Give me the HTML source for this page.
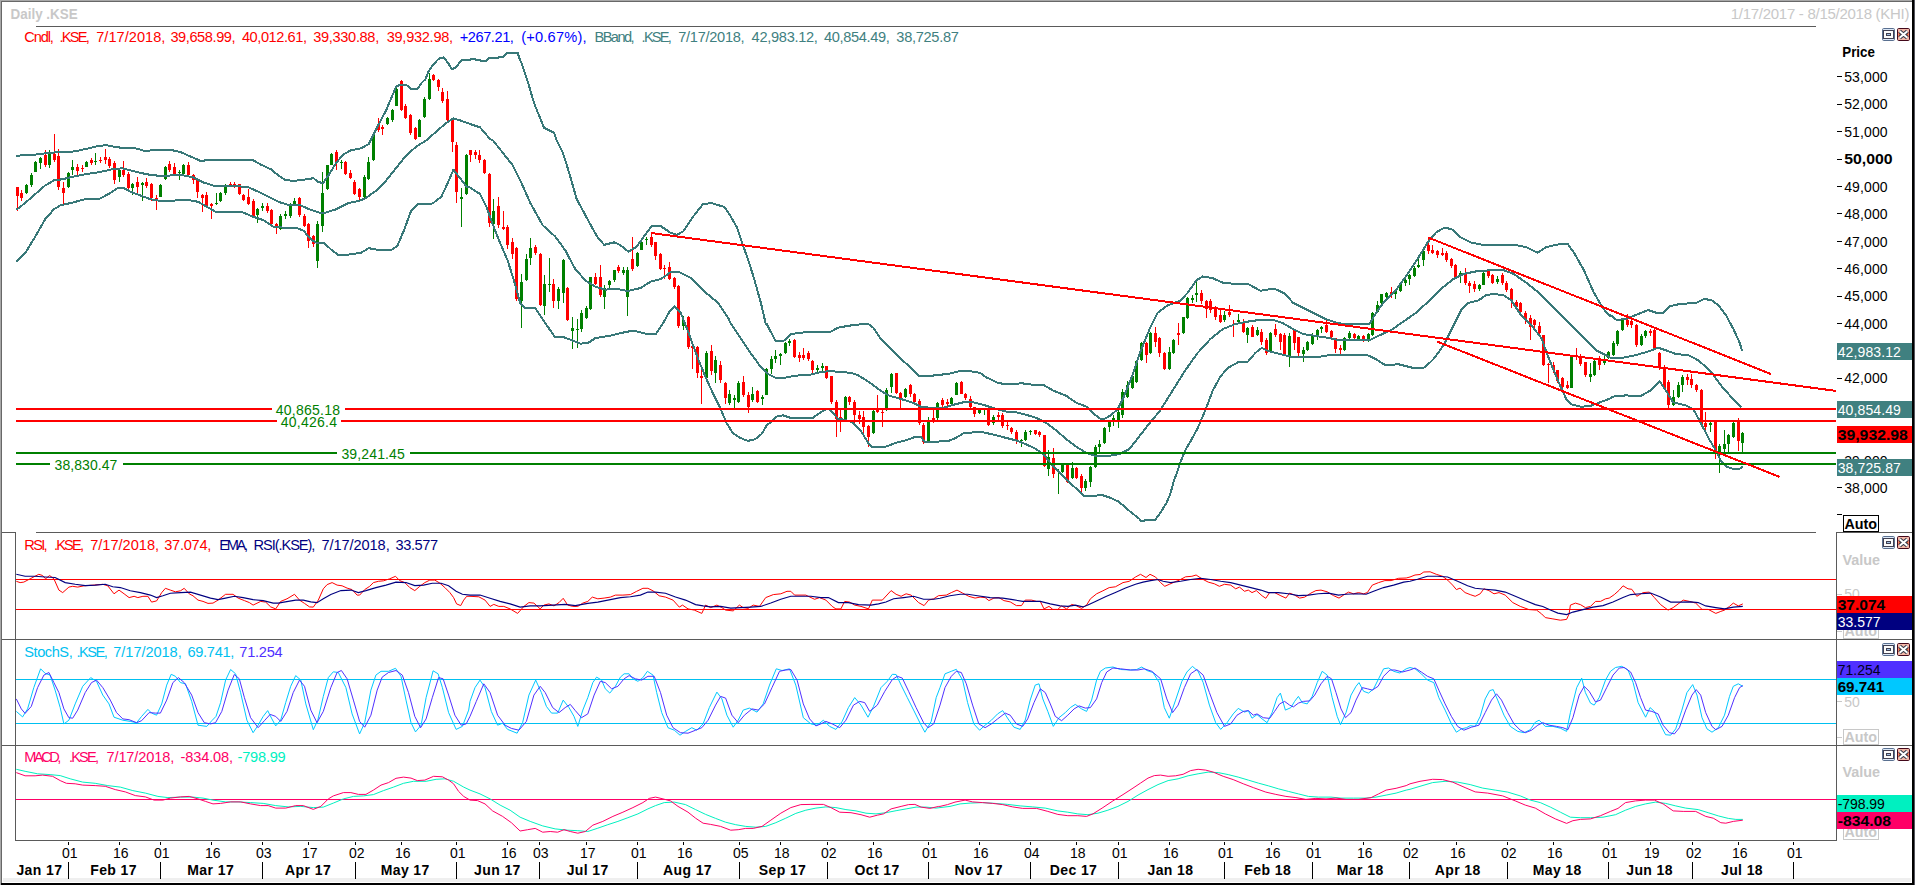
<!DOCTYPE html>
<html><head><meta charset="utf-8"><title>Daily .KSE</title>
<style>html,body{margin:0;padding:0;background:#fff;overflow:hidden}svg{display:block}text{font-family:"Liberation Sans",Arial,sans-serif;white-space:pre}</style>
</head><body>
<svg width="1915" height="885" viewBox="0 0 1915 885">
<g shape-rendering="crispEdges">
<rect x="0" y="0" width="1915" height="885" fill="#fff"/>
<rect x="0" y="0" width="1915" height="1" fill="#a8a8a8"/>
<rect x="1" y="1" width="1911" height="1" fill="#686868"/>
<rect x="0" y="0" width="1" height="885" fill="#a8a8a8"/>
<rect x="1" y="1" width="1" height="882" fill="#686868"/>
<rect x="1912" y="0" width="2" height="885" fill="#000"/>
<rect x="1914" y="0" width="1" height="885" fill="#55555d"/>
<rect x="3" y="878" width="1908" height="4" fill="#efefef"/>
<rect x="1" y="883" width="1913" height="2" fill="#000"/>
<rect x="36" y="26" width="1780" height="1" fill="#5a5a5a"/>
<rect x="36" y="532" width="1780" height="1" fill="#5a5a5a"/>
<rect x="2" y="532" width="14" height="1" fill="#5a5a5a"/>
<rect x="15" y="532" width="1" height="309" fill="#5a5a5a"/>
<rect x="1836" y="532" width="76" height="1" fill="#5a5a5a"/>
<rect x="1836" y="532" width="1" height="309" fill="#5a5a5a"/>
<rect x="2" y="639" width="1910" height="1" fill="#5a5a5a"/>
<rect x="2" y="745" width="1910" height="1" fill="#5a5a5a"/>
<rect x="15" y="840" width="1822" height="1" fill="#5a5a5a"/>
</g>
<clipPath id="cm"><rect x="16" y="27" width="1820" height="505"/></clipPath>
<g clip-path="url(#cm)">
<g shape-rendering="crispEdges">
<rect x="17" y="187" width="1" height="24" fill="#ff0000"/>
<rect x="16" y="187" width="3" height="9" fill="#ff0000"/>
<rect x="21" y="190" width="1" height="11" fill="#ff0000"/>
<rect x="20" y="193" width="3" height="5" fill="#ff0000"/>
<rect x="26" y="184" width="1" height="10" fill="#008000"/>
<rect x="25" y="185" width="3" height="8" fill="#008000"/>
<rect x="31" y="173" width="1" height="14" fill="#008000"/>
<rect x="30" y="175" width="3" height="10" fill="#008000"/>
<rect x="35" y="161" width="1" height="11" fill="#008000"/>
<rect x="34" y="162" width="3" height="10" fill="#008000"/>
<rect x="40" y="157" width="1" height="12" fill="#008000"/>
<rect x="39" y="158" width="3" height="5" fill="#008000"/>
<rect x="45" y="150" width="1" height="17" fill="#ff0000"/>
<rect x="44" y="155" width="3" height="10" fill="#ff0000"/>
<rect x="49" y="150" width="1" height="18" fill="#008000"/>
<rect x="48" y="152" width="3" height="13" fill="#008000"/>
<rect x="54" y="134" width="1" height="28" fill="#ff0000"/>
<rect x="53" y="154" width="3" height="6" fill="#ff0000"/>
<rect x="58" y="149" width="1" height="41" fill="#ff0000"/>
<rect x="57" y="156" width="3" height="31" fill="#ff0000"/>
<rect x="63" y="182" width="1" height="22" fill="#ff0000"/>
<rect x="62" y="188" width="3" height="5" fill="#ff0000"/>
<rect x="68" y="172" width="1" height="16" fill="#008000"/>
<rect x="67" y="173" width="3" height="14" fill="#008000"/>
<rect x="72" y="160" width="1" height="15" fill="#008000"/>
<rect x="71" y="167" width="3" height="3" fill="#008000"/>
<rect x="77" y="164" width="1" height="11" fill="#ff0000"/>
<rect x="76" y="167" width="3" height="4" fill="#ff0000"/>
<rect x="82" y="165" width="1" height="7" fill="#ff0000"/>
<rect x="81" y="168" width="3" height="1" fill="#ff0000"/>
<rect x="86" y="161" width="1" height="6" fill="#008000"/>
<rect x="85" y="162" width="3" height="5" fill="#008000"/>
<rect x="91" y="158" width="1" height="7" fill="#ff0000"/>
<rect x="90" y="160" width="3" height="3" fill="#ff0000"/>
<rect x="95" y="153" width="1" height="12" fill="#008000"/>
<rect x="94" y="161" width="3" height="1" fill="#008000"/>
<rect x="100" y="157" width="1" height="6" fill="#ff0000"/>
<rect x="99" y="160" width="3" height="1" fill="#ff0000"/>
<rect x="105" y="149" width="1" height="15" fill="#ff0000"/>
<rect x="104" y="157" width="3" height="3" fill="#ff0000"/>
<rect x="109" y="157" width="1" height="11" fill="#ff0000"/>
<rect x="108" y="159" width="3" height="7" fill="#ff0000"/>
<rect x="114" y="161" width="1" height="23" fill="#ff0000"/>
<rect x="113" y="163" width="3" height="17" fill="#ff0000"/>
<rect x="119" y="169" width="1" height="13" fill="#008000"/>
<rect x="118" y="170" width="3" height="7" fill="#008000"/>
<rect x="123" y="161" width="1" height="16" fill="#ff0000"/>
<rect x="122" y="170" width="3" height="5" fill="#ff0000"/>
<rect x="128" y="172" width="1" height="18" fill="#ff0000"/>
<rect x="127" y="174" width="3" height="14" fill="#ff0000"/>
<rect x="132" y="183" width="1" height="12" fill="#008000"/>
<rect x="131" y="184" width="3" height="4" fill="#008000"/>
<rect x="137" y="177" width="1" height="16" fill="#ff0000"/>
<rect x="136" y="182" width="3" height="5" fill="#ff0000"/>
<rect x="142" y="182" width="1" height="19" fill="#008000"/>
<rect x="141" y="183" width="3" height="2" fill="#008000"/>
<rect x="146" y="178" width="1" height="10" fill="#ff0000"/>
<rect x="145" y="182" width="3" height="4" fill="#ff0000"/>
<rect x="151" y="183" width="1" height="18" fill="#ff0000"/>
<rect x="150" y="184" width="3" height="14" fill="#ff0000"/>
<rect x="156" y="195" width="1" height="15" fill="#ff0000"/>
<rect x="155" y="198" width="3" height="1" fill="#ff0000"/>
<rect x="160" y="184" width="1" height="13" fill="#008000"/>
<rect x="159" y="185" width="3" height="12" fill="#008000"/>
<rect x="165" y="166" width="1" height="14" fill="#008000"/>
<rect x="164" y="167" width="3" height="12" fill="#008000"/>
<rect x="169" y="161" width="1" height="11" fill="#ff0000"/>
<rect x="168" y="164" width="3" height="6" fill="#ff0000"/>
<rect x="174" y="163" width="1" height="12" fill="#ff0000"/>
<rect x="173" y="167" width="3" height="8" fill="#ff0000"/>
<rect x="179" y="170" width="1" height="10" fill="#008000"/>
<rect x="178" y="172" width="3" height="1" fill="#008000"/>
<rect x="183" y="164" width="1" height="11" fill="#008000"/>
<rect x="182" y="165" width="3" height="9" fill="#008000"/>
<rect x="188" y="162" width="1" height="15" fill="#ff0000"/>
<rect x="187" y="165" width="3" height="10" fill="#ff0000"/>
<rect x="193" y="174" width="1" height="10" fill="#ff0000"/>
<rect x="192" y="175" width="3" height="5" fill="#ff0000"/>
<rect x="197" y="179" width="1" height="19" fill="#ff0000"/>
<rect x="196" y="180" width="3" height="12" fill="#ff0000"/>
<rect x="202" y="194" width="1" height="18" fill="#ff0000"/>
<rect x="201" y="195" width="3" height="3" fill="#ff0000"/>
<rect x="206" y="192" width="1" height="15" fill="#ff0000"/>
<rect x="205" y="195" width="3" height="11" fill="#ff0000"/>
<rect x="211" y="203" width="1" height="16" fill="#ff0000"/>
<rect x="210" y="204" width="3" height="2" fill="#ff0000"/>
<rect x="216" y="193" width="1" height="12" fill="#008000"/>
<rect x="215" y="203" width="3" height="1" fill="#008000"/>
<rect x="220" y="192" width="1" height="10" fill="#008000"/>
<rect x="219" y="193" width="3" height="8" fill="#008000"/>
<rect x="225" y="184" width="1" height="11" fill="#008000"/>
<rect x="224" y="185" width="3" height="8" fill="#008000"/>
<rect x="230" y="182" width="1" height="5" fill="#ff0000"/>
<rect x="229" y="184" width="3" height="1" fill="#ff0000"/>
<rect x="234" y="182" width="1" height="6" fill="#ff0000"/>
<rect x="233" y="184" width="3" height="3" fill="#ff0000"/>
<rect x="239" y="184" width="1" height="11" fill="#ff0000"/>
<rect x="238" y="184" width="3" height="10" fill="#ff0000"/>
<rect x="243" y="194" width="1" height="7" fill="#ff0000"/>
<rect x="242" y="195" width="3" height="5" fill="#ff0000"/>
<rect x="248" y="189" width="1" height="16" fill="#ff0000"/>
<rect x="247" y="197" width="3" height="7" fill="#ff0000"/>
<rect x="253" y="199" width="1" height="18" fill="#ff0000"/>
<rect x="252" y="201" width="3" height="15" fill="#ff0000"/>
<rect x="257" y="208" width="1" height="15" fill="#008000"/>
<rect x="256" y="209" width="3" height="6" fill="#008000"/>
<rect x="262" y="203" width="1" height="8" fill="#008000"/>
<rect x="261" y="206" width="3" height="2" fill="#008000"/>
<rect x="267" y="203" width="1" height="10" fill="#ff0000"/>
<rect x="266" y="206" width="3" height="5" fill="#ff0000"/>
<rect x="271" y="209" width="1" height="17" fill="#ff0000"/>
<rect x="270" y="210" width="3" height="14" fill="#ff0000"/>
<rect x="276" y="223" width="1" height="11" fill="#ff0000"/>
<rect x="275" y="224" width="3" height="4" fill="#ff0000"/>
<rect x="280" y="214" width="1" height="16" fill="#008000"/>
<rect x="279" y="216" width="3" height="13" fill="#008000"/>
<rect x="285" y="211" width="1" height="8" fill="#008000"/>
<rect x="284" y="214" width="3" height="2" fill="#008000"/>
<rect x="290" y="203" width="1" height="15" fill="#008000"/>
<rect x="289" y="204" width="3" height="12" fill="#008000"/>
<rect x="294" y="198" width="1" height="8" fill="#008000"/>
<rect x="293" y="201" width="3" height="3" fill="#008000"/>
<rect x="299" y="197" width="1" height="20" fill="#ff0000"/>
<rect x="298" y="198" width="3" height="17" fill="#ff0000"/>
<rect x="304" y="214" width="1" height="13" fill="#ff0000"/>
<rect x="303" y="216" width="3" height="10" fill="#ff0000"/>
<rect x="308" y="223" width="1" height="25" fill="#ff0000"/>
<rect x="307" y="224" width="3" height="17" fill="#ff0000"/>
<rect x="313" y="235" width="1" height="12" fill="#ff0000"/>
<rect x="312" y="236" width="3" height="8" fill="#ff0000"/>
<rect x="317" y="221" width="1" height="47" fill="#008000"/>
<rect x="316" y="224" width="3" height="37" fill="#008000"/>
<rect x="322" y="172" width="1" height="60" fill="#008000"/>
<rect x="321" y="193" width="3" height="33" fill="#008000"/>
<rect x="327" y="165" width="1" height="25" fill="#008000"/>
<rect x="326" y="165" width="3" height="24" fill="#008000"/>
<rect x="331" y="153" width="1" height="12" fill="#008000"/>
<rect x="330" y="154" width="3" height="11" fill="#008000"/>
<rect x="336" y="150" width="1" height="20" fill="#ff0000"/>
<rect x="335" y="152" width="3" height="10" fill="#ff0000"/>
<rect x="341" y="160" width="1" height="9" fill="#008000"/>
<rect x="340" y="162" width="3" height="1" fill="#008000"/>
<rect x="345" y="161" width="1" height="14" fill="#ff0000"/>
<rect x="344" y="162" width="3" height="12" fill="#ff0000"/>
<rect x="350" y="170" width="1" height="9" fill="#ff0000"/>
<rect x="349" y="173" width="3" height="5" fill="#ff0000"/>
<rect x="354" y="180" width="1" height="15" fill="#ff0000"/>
<rect x="353" y="182" width="3" height="12" fill="#ff0000"/>
<rect x="359" y="188" width="1" height="13" fill="#ff0000"/>
<rect x="358" y="189" width="3" height="8" fill="#ff0000"/>
<rect x="364" y="175" width="1" height="23" fill="#008000"/>
<rect x="363" y="177" width="3" height="20" fill="#008000"/>
<rect x="368" y="157" width="1" height="23" fill="#008000"/>
<rect x="367" y="162" width="3" height="17" fill="#008000"/>
<rect x="373" y="133" width="1" height="28" fill="#008000"/>
<rect x="372" y="134" width="3" height="26" fill="#008000"/>
<rect x="378" y="118" width="1" height="14" fill="#ff0000"/>
<rect x="377" y="124" width="3" height="6" fill="#ff0000"/>
<rect x="382" y="125" width="1" height="10" fill="#ff0000"/>
<rect x="381" y="127" width="3" height="2" fill="#ff0000"/>
<rect x="387" y="117" width="1" height="8" fill="#008000"/>
<rect x="386" y="118" width="3" height="6" fill="#008000"/>
<rect x="392" y="109" width="1" height="13" fill="#008000"/>
<rect x="391" y="110" width="3" height="10" fill="#008000"/>
<rect x="396" y="88" width="1" height="18" fill="#008000"/>
<rect x="395" y="89" width="3" height="17" fill="#008000"/>
<rect x="401" y="80" width="1" height="31" fill="#ff0000"/>
<rect x="400" y="81" width="3" height="29" fill="#ff0000"/>
<rect x="405" y="104" width="1" height="15" fill="#ff0000"/>
<rect x="404" y="106" width="3" height="12" fill="#ff0000"/>
<rect x="410" y="114" width="1" height="21" fill="#ff0000"/>
<rect x="409" y="115" width="3" height="18" fill="#ff0000"/>
<rect x="415" y="127" width="1" height="13" fill="#ff0000"/>
<rect x="414" y="128" width="3" height="11" fill="#ff0000"/>
<rect x="419" y="119" width="1" height="18" fill="#008000"/>
<rect x="418" y="120" width="3" height="17" fill="#008000"/>
<rect x="424" y="97" width="1" height="21" fill="#008000"/>
<rect x="423" y="99" width="3" height="18" fill="#008000"/>
<rect x="429" y="73" width="1" height="27" fill="#008000"/>
<rect x="428" y="79" width="3" height="20" fill="#008000"/>
<rect x="433" y="74" width="1" height="7" fill="#ff0000"/>
<rect x="432" y="75" width="3" height="5" fill="#ff0000"/>
<rect x="438" y="79" width="1" height="12" fill="#ff0000"/>
<rect x="437" y="80" width="3" height="7" fill="#ff0000"/>
<rect x="442" y="88" width="1" height="15" fill="#ff0000"/>
<rect x="441" y="92" width="3" height="9" fill="#ff0000"/>
<rect x="447" y="91" width="1" height="30" fill="#ff0000"/>
<rect x="446" y="99" width="3" height="21" fill="#ff0000"/>
<rect x="452" y="118" width="1" height="34" fill="#ff0000"/>
<rect x="451" y="119" width="3" height="23" fill="#ff0000"/>
<rect x="456" y="142" width="1" height="61" fill="#ff0000"/>
<rect x="455" y="145" width="3" height="47" fill="#ff0000"/>
<rect x="461" y="188" width="1" height="39" fill="#008000"/>
<rect x="460" y="197" width="3" height="2" fill="#008000"/>
<rect x="466" y="154" width="1" height="41" fill="#008000"/>
<rect x="465" y="155" width="3" height="39" fill="#008000"/>
<rect x="470" y="150" width="1" height="12" fill="#ff0000"/>
<rect x="469" y="150" width="3" height="5" fill="#ff0000"/>
<rect x="475" y="150" width="1" height="9" fill="#ff0000"/>
<rect x="474" y="152" width="3" height="3" fill="#ff0000"/>
<rect x="479" y="150" width="1" height="13" fill="#ff0000"/>
<rect x="478" y="155" width="3" height="5" fill="#ff0000"/>
<rect x="484" y="159" width="1" height="15" fill="#ff0000"/>
<rect x="483" y="160" width="3" height="13" fill="#ff0000"/>
<rect x="489" y="173" width="1" height="54" fill="#ff0000"/>
<rect x="488" y="174" width="3" height="49" fill="#ff0000"/>
<rect x="493" y="199" width="1" height="40" fill="#008000"/>
<rect x="492" y="211" width="3" height="13" fill="#008000"/>
<rect x="498" y="197" width="1" height="31" fill="#ff0000"/>
<rect x="497" y="206" width="3" height="19" fill="#ff0000"/>
<rect x="503" y="211" width="1" height="19" fill="#ff0000"/>
<rect x="502" y="227" width="3" height="2" fill="#ff0000"/>
<rect x="507" y="225" width="1" height="24" fill="#ff0000"/>
<rect x="506" y="227" width="3" height="18" fill="#ff0000"/>
<rect x="512" y="238" width="1" height="21" fill="#ff0000"/>
<rect x="511" y="242" width="3" height="12" fill="#ff0000"/>
<rect x="516" y="247" width="1" height="54" fill="#ff0000"/>
<rect x="515" y="248" width="3" height="51" fill="#ff0000"/>
<rect x="521" y="274" width="1" height="54" fill="#008000"/>
<rect x="520" y="282" width="3" height="19" fill="#008000"/>
<rect x="526" y="254" width="1" height="27" fill="#008000"/>
<rect x="525" y="259" width="3" height="21" fill="#008000"/>
<rect x="530" y="238" width="1" height="27" fill="#008000"/>
<rect x="529" y="248" width="3" height="10" fill="#008000"/>
<rect x="535" y="245" width="1" height="10" fill="#ff0000"/>
<rect x="534" y="247" width="3" height="6" fill="#ff0000"/>
<rect x="540" y="253" width="1" height="53" fill="#ff0000"/>
<rect x="539" y="254" width="3" height="51" fill="#ff0000"/>
<rect x="544" y="275" width="1" height="40" fill="#008000"/>
<rect x="543" y="284" width="3" height="22" fill="#008000"/>
<rect x="549" y="258" width="1" height="34" fill="#008000"/>
<rect x="548" y="284" width="3" height="1" fill="#008000"/>
<rect x="553" y="279" width="1" height="29" fill="#ff0000"/>
<rect x="552" y="284" width="3" height="17" fill="#ff0000"/>
<rect x="558" y="287" width="1" height="22" fill="#008000"/>
<rect x="557" y="289" width="3" height="12" fill="#008000"/>
<rect x="563" y="259" width="1" height="44" fill="#008000"/>
<rect x="562" y="260" width="3" height="33" fill="#008000"/>
<rect x="567" y="287" width="1" height="34" fill="#ff0000"/>
<rect x="566" y="288" width="3" height="32" fill="#ff0000"/>
<rect x="572" y="317" width="1" height="32" fill="#008000"/>
<rect x="571" y="328" width="3" height="3" fill="#008000"/>
<rect x="577" y="319" width="1" height="29" fill="#008000"/>
<rect x="576" y="329" width="3" height="1" fill="#008000"/>
<rect x="581" y="310" width="1" height="22" fill="#008000"/>
<rect x="580" y="313" width="3" height="16" fill="#008000"/>
<rect x="586" y="306" width="1" height="13" fill="#008000"/>
<rect x="585" y="308" width="3" height="10" fill="#008000"/>
<rect x="590" y="277" width="1" height="33" fill="#008000"/>
<rect x="589" y="277" width="3" height="32" fill="#008000"/>
<rect x="595" y="273" width="1" height="12" fill="#ff0000"/>
<rect x="594" y="277" width="3" height="7" fill="#ff0000"/>
<rect x="600" y="265" width="1" height="32" fill="#ff0000"/>
<rect x="599" y="277" width="3" height="18" fill="#ff0000"/>
<rect x="604" y="285" width="1" height="24" fill="#008000"/>
<rect x="603" y="288" width="3" height="9" fill="#008000"/>
<rect x="609" y="280" width="1" height="8" fill="#008000"/>
<rect x="608" y="281" width="3" height="4" fill="#008000"/>
<rect x="614" y="270" width="1" height="12" fill="#008000"/>
<rect x="613" y="270" width="3" height="10" fill="#008000"/>
<rect x="618" y="265" width="1" height="8" fill="#ff0000"/>
<rect x="617" y="267" width="3" height="4" fill="#ff0000"/>
<rect x="623" y="267" width="1" height="8" fill="#008000"/>
<rect x="622" y="270" width="3" height="3" fill="#008000"/>
<rect x="627" y="267" width="1" height="49" fill="#008000"/>
<rect x="626" y="270" width="3" height="27" fill="#008000"/>
<rect x="632" y="237" width="1" height="34" fill="#ff0000"/>
<rect x="631" y="259" width="3" height="10" fill="#ff0000"/>
<rect x="637" y="252" width="1" height="15" fill="#008000"/>
<rect x="636" y="253" width="3" height="13" fill="#008000"/>
<rect x="641" y="241" width="1" height="9" fill="#008000"/>
<rect x="640" y="242" width="3" height="8" fill="#008000"/>
<rect x="646" y="237" width="1" height="8" fill="#008000"/>
<rect x="645" y="239" width="3" height="1" fill="#008000"/>
<rect x="651" y="233" width="1" height="14" fill="#ff0000"/>
<rect x="650" y="237" width="3" height="8" fill="#ff0000"/>
<rect x="655" y="242" width="1" height="18" fill="#ff0000"/>
<rect x="654" y="242" width="3" height="14" fill="#ff0000"/>
<rect x="660" y="253" width="1" height="17" fill="#ff0000"/>
<rect x="659" y="254" width="3" height="15" fill="#ff0000"/>
<rect x="664" y="265" width="1" height="14" fill="#ff0000"/>
<rect x="663" y="268" width="3" height="1" fill="#ff0000"/>
<rect x="669" y="262" width="1" height="18" fill="#ff0000"/>
<rect x="668" y="267" width="3" height="12" fill="#ff0000"/>
<rect x="674" y="277" width="1" height="12" fill="#ff0000"/>
<rect x="673" y="278" width="3" height="9" fill="#ff0000"/>
<rect x="678" y="285" width="1" height="43" fill="#ff0000"/>
<rect x="677" y="286" width="3" height="40" fill="#ff0000"/>
<rect x="683" y="316" width="1" height="14" fill="#008000"/>
<rect x="682" y="320" width="3" height="6" fill="#008000"/>
<rect x="688" y="316" width="1" height="33" fill="#ff0000"/>
<rect x="687" y="317" width="3" height="30" fill="#ff0000"/>
<rect x="692" y="345" width="1" height="24" fill="#ff0000"/>
<rect x="691" y="346" width="3" height="2" fill="#ff0000"/>
<rect x="697" y="346" width="1" height="32" fill="#ff0000"/>
<rect x="696" y="347" width="3" height="26" fill="#ff0000"/>
<rect x="701" y="369" width="1" height="35" fill="#ff0000"/>
<rect x="700" y="376" width="3" height="2" fill="#ff0000"/>
<rect x="706" y="351" width="1" height="29" fill="#008000"/>
<rect x="705" y="353" width="3" height="25" fill="#008000"/>
<rect x="711" y="345" width="1" height="30" fill="#ff0000"/>
<rect x="710" y="351" width="3" height="20" fill="#ff0000"/>
<rect x="715" y="356" width="1" height="27" fill="#008000"/>
<rect x="714" y="360" width="3" height="13" fill="#008000"/>
<rect x="720" y="361" width="1" height="22" fill="#ff0000"/>
<rect x="719" y="365" width="3" height="15" fill="#ff0000"/>
<rect x="725" y="382" width="1" height="22" fill="#ff0000"/>
<rect x="724" y="383" width="3" height="15" fill="#ff0000"/>
<rect x="729" y="390" width="1" height="15" fill="#008000"/>
<rect x="728" y="394" width="3" height="9" fill="#008000"/>
<rect x="734" y="395" width="1" height="13" fill="#008000"/>
<rect x="733" y="398" width="3" height="2" fill="#008000"/>
<rect x="738" y="381" width="1" height="22" fill="#008000"/>
<rect x="737" y="383" width="3" height="19" fill="#008000"/>
<rect x="743" y="376" width="1" height="21" fill="#ff0000"/>
<rect x="742" y="382" width="3" height="13" fill="#ff0000"/>
<rect x="748" y="392" width="1" height="21" fill="#ff0000"/>
<rect x="747" y="395" width="3" height="12" fill="#ff0000"/>
<rect x="752" y="387" width="1" height="15" fill="#008000"/>
<rect x="751" y="394" width="3" height="6" fill="#008000"/>
<rect x="757" y="390" width="1" height="13" fill="#ff0000"/>
<rect x="756" y="391" width="3" height="11" fill="#ff0000"/>
<rect x="762" y="395" width="1" height="10" fill="#008000"/>
<rect x="761" y="397" width="3" height="2" fill="#008000"/>
<rect x="766" y="368" width="1" height="27" fill="#008000"/>
<rect x="765" y="369" width="3" height="26" fill="#008000"/>
<rect x="771" y="356" width="1" height="18" fill="#008000"/>
<rect x="770" y="359" width="3" height="10" fill="#008000"/>
<rect x="775" y="350" width="1" height="13" fill="#008000"/>
<rect x="774" y="356" width="3" height="3" fill="#008000"/>
<rect x="780" y="353" width="1" height="12" fill="#008000"/>
<rect x="779" y="354" width="3" height="2" fill="#008000"/>
<rect x="785" y="342" width="1" height="12" fill="#008000"/>
<rect x="784" y="343" width="3" height="10" fill="#008000"/>
<rect x="789" y="339" width="1" height="7" fill="#008000"/>
<rect x="788" y="341" width="3" height="2" fill="#008000"/>
<rect x="794" y="339" width="1" height="19" fill="#ff0000"/>
<rect x="793" y="340" width="3" height="17" fill="#ff0000"/>
<rect x="799" y="352" width="1" height="10" fill="#ff0000"/>
<rect x="798" y="355" width="3" height="3" fill="#ff0000"/>
<rect x="803" y="348" width="1" height="12" fill="#ff0000"/>
<rect x="802" y="355" width="3" height="3" fill="#ff0000"/>
<rect x="808" y="351" width="1" height="10" fill="#ff0000"/>
<rect x="807" y="353" width="3" height="6" fill="#ff0000"/>
<rect x="812" y="360" width="1" height="14" fill="#ff0000"/>
<rect x="811" y="361" width="3" height="9" fill="#ff0000"/>
<rect x="817" y="365" width="1" height="8" fill="#008000"/>
<rect x="816" y="368" width="3" height="2" fill="#008000"/>
<rect x="822" y="363" width="1" height="8" fill="#008000"/>
<rect x="821" y="366" width="3" height="2" fill="#008000"/>
<rect x="826" y="366" width="1" height="13" fill="#ff0000"/>
<rect x="825" y="366" width="3" height="12" fill="#ff0000"/>
<rect x="831" y="376" width="1" height="28" fill="#ff0000"/>
<rect x="830" y="376" width="3" height="26" fill="#ff0000"/>
<rect x="836" y="400" width="1" height="37" fill="#ff0000"/>
<rect x="835" y="402" width="3" height="17" fill="#ff0000"/>
<rect x="840" y="410" width="1" height="22" fill="#ff0000"/>
<rect x="839" y="417" width="3" height="2" fill="#ff0000"/>
<rect x="845" y="396" width="1" height="24" fill="#008000"/>
<rect x="844" y="397" width="3" height="22" fill="#008000"/>
<rect x="849" y="396" width="1" height="9" fill="#ff0000"/>
<rect x="848" y="397" width="3" height="5" fill="#ff0000"/>
<rect x="854" y="400" width="1" height="23" fill="#ff0000"/>
<rect x="853" y="402" width="3" height="13" fill="#ff0000"/>
<rect x="859" y="411" width="1" height="13" fill="#ff0000"/>
<rect x="858" y="415" width="3" height="4" fill="#ff0000"/>
<rect x="863" y="411" width="1" height="22" fill="#ff0000"/>
<rect x="862" y="417" width="3" height="10" fill="#ff0000"/>
<rect x="868" y="425" width="1" height="22" fill="#ff0000"/>
<rect x="867" y="426" width="3" height="11" fill="#ff0000"/>
<rect x="873" y="410" width="1" height="24" fill="#008000"/>
<rect x="872" y="411" width="3" height="22" fill="#008000"/>
<rect x="877" y="395" width="1" height="18" fill="#ff0000"/>
<rect x="876" y="410" width="3" height="2" fill="#ff0000"/>
<rect x="882" y="410" width="1" height="17" fill="#ff0000"/>
<rect x="881" y="412" width="3" height="1" fill="#ff0000"/>
<rect x="886" y="388" width="1" height="23" fill="#008000"/>
<rect x="885" y="390" width="3" height="20" fill="#008000"/>
<rect x="891" y="373" width="1" height="20" fill="#008000"/>
<rect x="890" y="374" width="3" height="13" fill="#008000"/>
<rect x="896" y="373" width="1" height="21" fill="#ff0000"/>
<rect x="895" y="373" width="3" height="20" fill="#ff0000"/>
<rect x="900" y="392" width="1" height="16" fill="#ff0000"/>
<rect x="899" y="393" width="3" height="5" fill="#ff0000"/>
<rect x="905" y="388" width="1" height="10" fill="#008000"/>
<rect x="904" y="389" width="3" height="8" fill="#008000"/>
<rect x="910" y="384" width="1" height="13" fill="#ff0000"/>
<rect x="909" y="385" width="3" height="9" fill="#ff0000"/>
<rect x="914" y="393" width="1" height="11" fill="#ff0000"/>
<rect x="913" y="394" width="3" height="8" fill="#ff0000"/>
<rect x="919" y="399" width="1" height="26" fill="#ff0000"/>
<rect x="918" y="401" width="3" height="22" fill="#ff0000"/>
<rect x="923" y="423" width="1" height="21" fill="#ff0000"/>
<rect x="922" y="425" width="3" height="17" fill="#ff0000"/>
<rect x="928" y="417" width="1" height="25" fill="#008000"/>
<rect x="927" y="422" width="3" height="19" fill="#008000"/>
<rect x="933" y="410" width="1" height="13" fill="#ff0000"/>
<rect x="932" y="418" width="3" height="2" fill="#ff0000"/>
<rect x="937" y="402" width="1" height="18" fill="#008000"/>
<rect x="936" y="403" width="3" height="15" fill="#008000"/>
<rect x="942" y="398" width="1" height="10" fill="#ff0000"/>
<rect x="941" y="400" width="3" height="5" fill="#ff0000"/>
<rect x="947" y="399" width="1" height="8" fill="#ff0000"/>
<rect x="946" y="402" width="3" height="2" fill="#ff0000"/>
<rect x="951" y="397" width="1" height="9" fill="#008000"/>
<rect x="950" y="398" width="3" height="6" fill="#008000"/>
<rect x="956" y="382" width="1" height="13" fill="#008000"/>
<rect x="955" y="383" width="3" height="12" fill="#008000"/>
<rect x="961" y="381" width="1" height="13" fill="#ff0000"/>
<rect x="960" y="382" width="3" height="12" fill="#ff0000"/>
<rect x="965" y="393" width="1" height="7" fill="#ff0000"/>
<rect x="964" y="394" width="3" height="4" fill="#ff0000"/>
<rect x="970" y="396" width="1" height="12" fill="#ff0000"/>
<rect x="969" y="399" width="3" height="8" fill="#ff0000"/>
<rect x="974" y="407" width="1" height="10" fill="#ff0000"/>
<rect x="973" y="407" width="3" height="7" fill="#ff0000"/>
<rect x="979" y="410" width="1" height="4" fill="#008000"/>
<rect x="978" y="410" width="3" height="3" fill="#008000"/>
<rect x="984" y="408" width="1" height="7" fill="#008000"/>
<rect x="983" y="409" width="3" height="1" fill="#008000"/>
<rect x="988" y="407" width="1" height="19" fill="#ff0000"/>
<rect x="987" y="408" width="3" height="17" fill="#ff0000"/>
<rect x="993" y="415" width="1" height="10" fill="#008000"/>
<rect x="992" y="417" width="3" height="6" fill="#008000"/>
<rect x="998" y="412" width="1" height="8" fill="#ff0000"/>
<rect x="997" y="415" width="3" height="2" fill="#ff0000"/>
<rect x="1002" y="413" width="1" height="15" fill="#ff0000"/>
<rect x="1001" y="415" width="3" height="11" fill="#ff0000"/>
<rect x="1007" y="422" width="1" height="8" fill="#ff0000"/>
<rect x="1006" y="425" width="3" height="1" fill="#ff0000"/>
<rect x="1011" y="427" width="1" height="7" fill="#ff0000"/>
<rect x="1010" y="428" width="3" height="4" fill="#ff0000"/>
<rect x="1016" y="430" width="1" height="14" fill="#ff0000"/>
<rect x="1015" y="432" width="3" height="8" fill="#ff0000"/>
<rect x="1021" y="439" width="1" height="8" fill="#008000"/>
<rect x="1020" y="440" width="3" height="1" fill="#008000"/>
<rect x="1025" y="430" width="1" height="11" fill="#008000"/>
<rect x="1024" y="432" width="3" height="8" fill="#008000"/>
<rect x="1030" y="430" width="1" height="5" fill="#008000"/>
<rect x="1029" y="431" width="3" height="1" fill="#008000"/>
<rect x="1035" y="430" width="1" height="5" fill="#ff0000"/>
<rect x="1034" y="430" width="3" height="4" fill="#ff0000"/>
<rect x="1039" y="431" width="1" height="6" fill="#ff0000"/>
<rect x="1038" y="432" width="3" height="3" fill="#ff0000"/>
<rect x="1044" y="435" width="1" height="32" fill="#ff0000"/>
<rect x="1043" y="435" width="3" height="31" fill="#ff0000"/>
<rect x="1048" y="450" width="1" height="26" fill="#008000"/>
<rect x="1047" y="457" width="3" height="12" fill="#008000"/>
<rect x="1053" y="448" width="1" height="30" fill="#ff0000"/>
<rect x="1052" y="458" width="3" height="16" fill="#ff0000"/>
<rect x="1058" y="469" width="1" height="25" fill="#008000"/>
<rect x="1057" y="471" width="3" height="1" fill="#008000"/>
<rect x="1062" y="463" width="1" height="10" fill="#008000"/>
<rect x="1061" y="464" width="3" height="8" fill="#008000"/>
<rect x="1067" y="463" width="1" height="20" fill="#ff0000"/>
<rect x="1066" y="464" width="3" height="18" fill="#ff0000"/>
<rect x="1072" y="462" width="1" height="17" fill="#008000"/>
<rect x="1071" y="468" width="3" height="10" fill="#008000"/>
<rect x="1076" y="467" width="1" height="12" fill="#ff0000"/>
<rect x="1075" y="468" width="3" height="10" fill="#ff0000"/>
<rect x="1081" y="474" width="1" height="19" fill="#ff0000"/>
<rect x="1080" y="476" width="3" height="12" fill="#ff0000"/>
<rect x="1085" y="479" width="1" height="12" fill="#008000"/>
<rect x="1084" y="481" width="3" height="7" fill="#008000"/>
<rect x="1090" y="466" width="1" height="21" fill="#008000"/>
<rect x="1089" y="467" width="3" height="15" fill="#008000"/>
<rect x="1095" y="445" width="1" height="23" fill="#008000"/>
<rect x="1094" y="447" width="3" height="20" fill="#008000"/>
<rect x="1099" y="440" width="1" height="13" fill="#008000"/>
<rect x="1098" y="444" width="3" height="3" fill="#008000"/>
<rect x="1104" y="427" width="1" height="17" fill="#008000"/>
<rect x="1103" y="428" width="3" height="15" fill="#008000"/>
<rect x="1109" y="420" width="1" height="12" fill="#008000"/>
<rect x="1108" y="422" width="3" height="5" fill="#008000"/>
<rect x="1113" y="415" width="1" height="11" fill="#008000"/>
<rect x="1112" y="418" width="3" height="2" fill="#008000"/>
<rect x="1118" y="409" width="1" height="19" fill="#008000"/>
<rect x="1117" y="412" width="3" height="8" fill="#008000"/>
<rect x="1122" y="389" width="1" height="29" fill="#008000"/>
<rect x="1121" y="392" width="3" height="23" fill="#008000"/>
<rect x="1127" y="381" width="1" height="17" fill="#008000"/>
<rect x="1126" y="385" width="3" height="12" fill="#008000"/>
<rect x="1132" y="376" width="1" height="13" fill="#008000"/>
<rect x="1131" y="376" width="3" height="12" fill="#008000"/>
<rect x="1136" y="360" width="1" height="23" fill="#008000"/>
<rect x="1135" y="361" width="3" height="21" fill="#008000"/>
<rect x="1141" y="342" width="1" height="19" fill="#008000"/>
<rect x="1140" y="343" width="3" height="17" fill="#008000"/>
<rect x="1146" y="342" width="1" height="21" fill="#ff0000"/>
<rect x="1145" y="343" width="3" height="12" fill="#ff0000"/>
<rect x="1150" y="332" width="1" height="22" fill="#008000"/>
<rect x="1149" y="333" width="3" height="20" fill="#008000"/>
<rect x="1155" y="327" width="1" height="20" fill="#ff0000"/>
<rect x="1154" y="333" width="3" height="9" fill="#ff0000"/>
<rect x="1159" y="337" width="1" height="20" fill="#ff0000"/>
<rect x="1158" y="338" width="3" height="15" fill="#ff0000"/>
<rect x="1164" y="352" width="1" height="18" fill="#ff0000"/>
<rect x="1163" y="353" width="3" height="16" fill="#ff0000"/>
<rect x="1169" y="347" width="1" height="23" fill="#008000"/>
<rect x="1168" y="352" width="3" height="17" fill="#008000"/>
<rect x="1173" y="339" width="1" height="15" fill="#008000"/>
<rect x="1172" y="340" width="3" height="13" fill="#008000"/>
<rect x="1178" y="323" width="1" height="22" fill="#ff0000"/>
<rect x="1177" y="333" width="3" height="2" fill="#ff0000"/>
<rect x="1183" y="317" width="1" height="17" fill="#008000"/>
<rect x="1182" y="317" width="3" height="16" fill="#008000"/>
<rect x="1187" y="297" width="1" height="22" fill="#008000"/>
<rect x="1186" y="298" width="3" height="20" fill="#008000"/>
<rect x="1192" y="295" width="1" height="8" fill="#008000"/>
<rect x="1191" y="298" width="3" height="2" fill="#008000"/>
<rect x="1196" y="281" width="1" height="21" fill="#008000"/>
<rect x="1195" y="293" width="3" height="2" fill="#008000"/>
<rect x="1201" y="290" width="1" height="14" fill="#ff0000"/>
<rect x="1200" y="293" width="3" height="8" fill="#ff0000"/>
<rect x="1206" y="300" width="1" height="18" fill="#ff0000"/>
<rect x="1205" y="301" width="3" height="8" fill="#ff0000"/>
<rect x="1210" y="299" width="1" height="14" fill="#ff0000"/>
<rect x="1209" y="301" width="3" height="9" fill="#ff0000"/>
<rect x="1215" y="306" width="1" height="14" fill="#ff0000"/>
<rect x="1214" y="307" width="3" height="10" fill="#ff0000"/>
<rect x="1220" y="308" width="1" height="15" fill="#ff0000"/>
<rect x="1219" y="315" width="3" height="7" fill="#ff0000"/>
<rect x="1224" y="311" width="1" height="11" fill="#008000"/>
<rect x="1223" y="315" width="3" height="5" fill="#008000"/>
<rect x="1229" y="305" width="1" height="12" fill="#ff0000"/>
<rect x="1228" y="312" width="3" height="3" fill="#ff0000"/>
<rect x="1233" y="320" width="1" height="17" fill="#ff0000"/>
<rect x="1232" y="324" width="3" height="1" fill="#ff0000"/>
<rect x="1238" y="314" width="1" height="9" fill="#008000"/>
<rect x="1237" y="320" width="3" height="2" fill="#008000"/>
<rect x="1243" y="319" width="1" height="14" fill="#ff0000"/>
<rect x="1242" y="322" width="3" height="10" fill="#ff0000"/>
<rect x="1247" y="327" width="1" height="16" fill="#008000"/>
<rect x="1246" y="328" width="3" height="7" fill="#008000"/>
<rect x="1252" y="325" width="1" height="12" fill="#ff0000"/>
<rect x="1251" y="327" width="3" height="10" fill="#ff0000"/>
<rect x="1257" y="327" width="1" height="9" fill="#008000"/>
<rect x="1256" y="330" width="3" height="5" fill="#008000"/>
<rect x="1261" y="329" width="1" height="16" fill="#ff0000"/>
<rect x="1260" y="332" width="3" height="10" fill="#ff0000"/>
<rect x="1266" y="338" width="1" height="17" fill="#ff0000"/>
<rect x="1265" y="340" width="3" height="13" fill="#ff0000"/>
<rect x="1270" y="332" width="1" height="21" fill="#008000"/>
<rect x="1269" y="333" width="3" height="19" fill="#008000"/>
<rect x="1275" y="324" width="1" height="13" fill="#ff0000"/>
<rect x="1274" y="329" width="3" height="6" fill="#ff0000"/>
<rect x="1280" y="333" width="1" height="17" fill="#ff0000"/>
<rect x="1279" y="334" width="3" height="8" fill="#ff0000"/>
<rect x="1284" y="333" width="1" height="22" fill="#ff0000"/>
<rect x="1283" y="335" width="3" height="19" fill="#ff0000"/>
<rect x="1289" y="333" width="1" height="34" fill="#008000"/>
<rect x="1288" y="336" width="3" height="21" fill="#008000"/>
<rect x="1294" y="330" width="1" height="20" fill="#ff0000"/>
<rect x="1293" y="330" width="3" height="13" fill="#ff0000"/>
<rect x="1298" y="337" width="1" height="20" fill="#ff0000"/>
<rect x="1297" y="337" width="3" height="16" fill="#ff0000"/>
<rect x="1303" y="347" width="1" height="15" fill="#008000"/>
<rect x="1302" y="350" width="3" height="4" fill="#008000"/>
<rect x="1307" y="341" width="1" height="10" fill="#008000"/>
<rect x="1306" y="342" width="3" height="8" fill="#008000"/>
<rect x="1312" y="333" width="1" height="12" fill="#008000"/>
<rect x="1311" y="336" width="3" height="8" fill="#008000"/>
<rect x="1317" y="329" width="1" height="11" fill="#008000"/>
<rect x="1316" y="330" width="3" height="5" fill="#008000"/>
<rect x="1321" y="326" width="1" height="7" fill="#008000"/>
<rect x="1320" y="327" width="3" height="2" fill="#008000"/>
<rect x="1326" y="320" width="1" height="13" fill="#ff0000"/>
<rect x="1325" y="325" width="3" height="7" fill="#ff0000"/>
<rect x="1331" y="330" width="1" height="8" fill="#ff0000"/>
<rect x="1330" y="331" width="3" height="6" fill="#ff0000"/>
<rect x="1335" y="338" width="1" height="15" fill="#ff0000"/>
<rect x="1334" y="338" width="3" height="11" fill="#ff0000"/>
<rect x="1340" y="345" width="1" height="10" fill="#ff0000"/>
<rect x="1339" y="348" width="3" height="2" fill="#ff0000"/>
<rect x="1344" y="337" width="1" height="14" fill="#008000"/>
<rect x="1343" y="338" width="3" height="12" fill="#008000"/>
<rect x="1349" y="331" width="1" height="9" fill="#008000"/>
<rect x="1348" y="333" width="3" height="5" fill="#008000"/>
<rect x="1354" y="333" width="1" height="7" fill="#ff0000"/>
<rect x="1353" y="334" width="3" height="4" fill="#ff0000"/>
<rect x="1358" y="335" width="1" height="4" fill="#008000"/>
<rect x="1357" y="336" width="3" height="3" fill="#008000"/>
<rect x="1363" y="335" width="1" height="7" fill="#ff0000"/>
<rect x="1362" y="336" width="3" height="3" fill="#ff0000"/>
<rect x="1368" y="333" width="1" height="9" fill="#008000"/>
<rect x="1367" y="334" width="3" height="6" fill="#008000"/>
<rect x="1372" y="312" width="1" height="24" fill="#008000"/>
<rect x="1371" y="313" width="3" height="22" fill="#008000"/>
<rect x="1377" y="301" width="1" height="11" fill="#008000"/>
<rect x="1376" y="305" width="3" height="7" fill="#008000"/>
<rect x="1381" y="294" width="1" height="10" fill="#008000"/>
<rect x="1380" y="294" width="3" height="9" fill="#008000"/>
<rect x="1386" y="292" width="1" height="6" fill="#008000"/>
<rect x="1385" y="293" width="3" height="4" fill="#008000"/>
<rect x="1391" y="287" width="1" height="11" fill="#ff0000"/>
<rect x="1390" y="292" width="3" height="2" fill="#ff0000"/>
<rect x="1395" y="290" width="1" height="9" fill="#008000"/>
<rect x="1394" y="291" width="3" height="3" fill="#008000"/>
<rect x="1400" y="282" width="1" height="10" fill="#008000"/>
<rect x="1399" y="283" width="3" height="8" fill="#008000"/>
<rect x="1405" y="279" width="1" height="7" fill="#008000"/>
<rect x="1404" y="280" width="3" height="3" fill="#008000"/>
<rect x="1409" y="274" width="1" height="11" fill="#008000"/>
<rect x="1408" y="275" width="3" height="4" fill="#008000"/>
<rect x="1414" y="266" width="1" height="11" fill="#008000"/>
<rect x="1413" y="268" width="3" height="8" fill="#008000"/>
<rect x="1418" y="255" width="1" height="13" fill="#008000"/>
<rect x="1417" y="265" width="3" height="2" fill="#008000"/>
<rect x="1423" y="250" width="1" height="16" fill="#008000"/>
<rect x="1422" y="251" width="3" height="9" fill="#008000"/>
<rect x="1428" y="238" width="1" height="16" fill="#ff0000"/>
<rect x="1427" y="245" width="3" height="6" fill="#ff0000"/>
<rect x="1432" y="245" width="1" height="9" fill="#ff0000"/>
<rect x="1431" y="250" width="3" height="3" fill="#ff0000"/>
<rect x="1437" y="250" width="1" height="8" fill="#ff0000"/>
<rect x="1436" y="251" width="3" height="4" fill="#ff0000"/>
<rect x="1442" y="248" width="1" height="8" fill="#ff0000"/>
<rect x="1441" y="253" width="3" height="2" fill="#ff0000"/>
<rect x="1446" y="251" width="1" height="11" fill="#ff0000"/>
<rect x="1445" y="253" width="3" height="7" fill="#ff0000"/>
<rect x="1451" y="258" width="1" height="10" fill="#ff0000"/>
<rect x="1450" y="259" width="3" height="7" fill="#ff0000"/>
<rect x="1455" y="264" width="1" height="14" fill="#ff0000"/>
<rect x="1454" y="265" width="3" height="13" fill="#ff0000"/>
<rect x="1460" y="271" width="1" height="12" fill="#008000"/>
<rect x="1459" y="273" width="3" height="3" fill="#008000"/>
<rect x="1465" y="268" width="1" height="17" fill="#ff0000"/>
<rect x="1464" y="273" width="3" height="10" fill="#ff0000"/>
<rect x="1469" y="281" width="1" height="12" fill="#ff0000"/>
<rect x="1468" y="283" width="3" height="3" fill="#ff0000"/>
<rect x="1474" y="281" width="1" height="11" fill="#ff0000"/>
<rect x="1473" y="284" width="3" height="5" fill="#ff0000"/>
<rect x="1479" y="284" width="1" height="7" fill="#008000"/>
<rect x="1478" y="285" width="3" height="4" fill="#008000"/>
<rect x="1483" y="272" width="1" height="13" fill="#008000"/>
<rect x="1482" y="273" width="3" height="12" fill="#008000"/>
<rect x="1488" y="270" width="1" height="8" fill="#ff0000"/>
<rect x="1487" y="271" width="3" height="5" fill="#ff0000"/>
<rect x="1492" y="274" width="1" height="10" fill="#ff0000"/>
<rect x="1491" y="275" width="3" height="8" fill="#ff0000"/>
<rect x="1497" y="276" width="1" height="8" fill="#008000"/>
<rect x="1496" y="279" width="3" height="3" fill="#008000"/>
<rect x="1502" y="273" width="1" height="12" fill="#ff0000"/>
<rect x="1501" y="275" width="3" height="8" fill="#ff0000"/>
<rect x="1506" y="281" width="1" height="11" fill="#ff0000"/>
<rect x="1505" y="283" width="3" height="7" fill="#ff0000"/>
<rect x="1511" y="288" width="1" height="20" fill="#ff0000"/>
<rect x="1510" y="289" width="3" height="11" fill="#ff0000"/>
<rect x="1516" y="300" width="1" height="10" fill="#ff0000"/>
<rect x="1515" y="302" width="3" height="5" fill="#ff0000"/>
<rect x="1520" y="302" width="1" height="11" fill="#ff0000"/>
<rect x="1519" y="303" width="3" height="9" fill="#ff0000"/>
<rect x="1525" y="311" width="1" height="13" fill="#ff0000"/>
<rect x="1524" y="313" width="3" height="7" fill="#ff0000"/>
<rect x="1530" y="315" width="1" height="25" fill="#ff0000"/>
<rect x="1529" y="318" width="3" height="9" fill="#ff0000"/>
<rect x="1534" y="319" width="1" height="11" fill="#ff0000"/>
<rect x="1533" y="320" width="3" height="5" fill="#ff0000"/>
<rect x="1539" y="322" width="1" height="12" fill="#ff0000"/>
<rect x="1538" y="326" width="3" height="7" fill="#ff0000"/>
<rect x="1543" y="335" width="1" height="31" fill="#ff0000"/>
<rect x="1542" y="335" width="3" height="30" fill="#ff0000"/>
<rect x="1548" y="363" width="1" height="20" fill="#ff0000"/>
<rect x="1547" y="364" width="3" height="1" fill="#ff0000"/>
<rect x="1553" y="362" width="1" height="11" fill="#ff0000"/>
<rect x="1552" y="365" width="3" height="5" fill="#ff0000"/>
<rect x="1557" y="370" width="1" height="13" fill="#ff0000"/>
<rect x="1556" y="370" width="3" height="11" fill="#ff0000"/>
<rect x="1562" y="377" width="1" height="16" fill="#ff0000"/>
<rect x="1561" y="378" width="3" height="9" fill="#ff0000"/>
<rect x="1567" y="381" width="1" height="8" fill="#ff0000"/>
<rect x="1566" y="385" width="3" height="3" fill="#ff0000"/>
<rect x="1571" y="356" width="1" height="32" fill="#008000"/>
<rect x="1570" y="357" width="3" height="31" fill="#008000"/>
<rect x="1576" y="348" width="1" height="12" fill="#ff0000"/>
<rect x="1575" y="355" width="3" height="2" fill="#ff0000"/>
<rect x="1580" y="354" width="1" height="12" fill="#ff0000"/>
<rect x="1579" y="357" width="3" height="7" fill="#ff0000"/>
<rect x="1585" y="362" width="1" height="15" fill="#ff0000"/>
<rect x="1584" y="362" width="3" height="13" fill="#ff0000"/>
<rect x="1590" y="363" width="1" height="19" fill="#008000"/>
<rect x="1589" y="374" width="3" height="3" fill="#008000"/>
<rect x="1594" y="360" width="1" height="16" fill="#008000"/>
<rect x="1593" y="361" width="3" height="14" fill="#008000"/>
<rect x="1599" y="356" width="1" height="14" fill="#ff0000"/>
<rect x="1598" y="358" width="3" height="7" fill="#ff0000"/>
<rect x="1604" y="355" width="1" height="10" fill="#008000"/>
<rect x="1603" y="361" width="3" height="2" fill="#008000"/>
<rect x="1608" y="351" width="1" height="8" fill="#008000"/>
<rect x="1607" y="352" width="3" height="6" fill="#008000"/>
<rect x="1613" y="341" width="1" height="15" fill="#008000"/>
<rect x="1612" y="343" width="3" height="12" fill="#008000"/>
<rect x="1617" y="330" width="1" height="16" fill="#008000"/>
<rect x="1616" y="331" width="3" height="13" fill="#008000"/>
<rect x="1622" y="319" width="1" height="12" fill="#008000"/>
<rect x="1621" y="320" width="3" height="10" fill="#008000"/>
<rect x="1627" y="314" width="1" height="13" fill="#ff0000"/>
<rect x="1626" y="320" width="3" height="5" fill="#ff0000"/>
<rect x="1631" y="318" width="1" height="10" fill="#ff0000"/>
<rect x="1630" y="321" width="3" height="4" fill="#ff0000"/>
<rect x="1636" y="324" width="1" height="23" fill="#ff0000"/>
<rect x="1635" y="325" width="3" height="20" fill="#ff0000"/>
<rect x="1641" y="334" width="1" height="12" fill="#008000"/>
<rect x="1640" y="336" width="3" height="9" fill="#008000"/>
<rect x="1645" y="330" width="1" height="8" fill="#008000"/>
<rect x="1644" y="331" width="3" height="5" fill="#008000"/>
<rect x="1650" y="329" width="1" height="7" fill="#ff0000"/>
<rect x="1649" y="331" width="3" height="2" fill="#ff0000"/>
<rect x="1654" y="329" width="1" height="21" fill="#ff0000"/>
<rect x="1653" y="330" width="3" height="18" fill="#ff0000"/>
<rect x="1659" y="352" width="1" height="18" fill="#ff0000"/>
<rect x="1658" y="353" width="3" height="15" fill="#ff0000"/>
<rect x="1664" y="365" width="1" height="24" fill="#ff0000"/>
<rect x="1663" y="367" width="3" height="21" fill="#ff0000"/>
<rect x="1668" y="380" width="1" height="28" fill="#ff0000"/>
<rect x="1667" y="382" width="3" height="23" fill="#ff0000"/>
<rect x="1673" y="390" width="1" height="16" fill="#008000"/>
<rect x="1672" y="397" width="3" height="8" fill="#008000"/>
<rect x="1678" y="382" width="1" height="16" fill="#008000"/>
<rect x="1677" y="385" width="3" height="12" fill="#008000"/>
<rect x="1682" y="375" width="1" height="17" fill="#008000"/>
<rect x="1681" y="377" width="3" height="8" fill="#008000"/>
<rect x="1687" y="374" width="1" height="11" fill="#ff0000"/>
<rect x="1686" y="377" width="3" height="3" fill="#ff0000"/>
<rect x="1691" y="374" width="1" height="14" fill="#ff0000"/>
<rect x="1690" y="379" width="3" height="6" fill="#ff0000"/>
<rect x="1696" y="384" width="1" height="8" fill="#ff0000"/>
<rect x="1695" y="385" width="3" height="5" fill="#ff0000"/>
<rect x="1701" y="389" width="1" height="36" fill="#ff0000"/>
<rect x="1700" y="390" width="3" height="34" fill="#ff0000"/>
<rect x="1705" y="412" width="1" height="18" fill="#ff0000"/>
<rect x="1704" y="423" width="3" height="4" fill="#ff0000"/>
<rect x="1710" y="422" width="1" height="10" fill="#008000"/>
<rect x="1709" y="423" width="3" height="2" fill="#008000"/>
<rect x="1715" y="422" width="1" height="37" fill="#ff0000"/>
<rect x="1714" y="422" width="3" height="31" fill="#ff0000"/>
<rect x="1719" y="444" width="1" height="29" fill="#008000"/>
<rect x="1718" y="446" width="3" height="7" fill="#008000"/>
<rect x="1724" y="430" width="1" height="23" fill="#008000"/>
<rect x="1723" y="444" width="3" height="5" fill="#008000"/>
<rect x="1728" y="434" width="1" height="19" fill="#008000"/>
<rect x="1727" y="435" width="3" height="9" fill="#008000"/>
<rect x="1733" y="422" width="1" height="16" fill="#008000"/>
<rect x="1732" y="423" width="3" height="14" fill="#008000"/>
<rect x="1738" y="418" width="1" height="33" fill="#ff0000"/>
<rect x="1737" y="422" width="3" height="19" fill="#ff0000"/>
<rect x="1742" y="432" width="1" height="21" fill="#008000"/>
<rect x="1741" y="433" width="3" height="10" fill="#008000"/>
</g>
<polyline points="16.3,155.9 25.1,154.9 35.1,154.6 45.1,153.4 55.2,152.4 65.2,152.4 75.2,151.3 85.3,149.1 95.3,146.6 105.3,145.1 110.3,145.8 115.4,147.3 125.4,147.8 135.4,148.3 145.5,151.1 155.5,149.8 170.5,149.8 180.6,152.1 190.6,156.6 200.6,160.9 210.7,159.9 225.7,160.4 240.8,160.4 253.3,160.4 260.8,164.6 270.8,169.2 278.4,175.4 285.9,180.4 295.9,180.7 306.0,179.4 313.5,178.2 318.5,182.2 323.0,182.9 328.5,175.4 336.1,162.9 343.6,154.1 351.1,150.3 361.1,148.3 368.7,144.1 376.2,129.0 386.2,110.2 396.2,86.4 400.0,84.8 406.3,84.8 410.8,88.9 416.5,88.9 418.4,88.0 421.5,82.9 425.3,79.4 428.5,71.5 432.9,64.9 438.6,58.9 441.1,57.9 443.7,57.3 448.1,63.0 451.9,69.0 455.1,68.0 458.2,64.6 461.7,59.8 470.3,59.8 470.9,58.5 475.3,58.5 475.9,59.8 480.4,60.1 481.0,61.1 486.4,61.1 489.2,57.9 498.1,57.9 498.7,56.6 503.5,56.6 507.6,52.8 517.7,52.8 519.6,58.9 521.4,62.6 527.7,81.4 533.9,102.7 544.0,127.8 554.0,132.8 556.5,140.0 562.8,152.5 569.1,172.6 576.6,198.9 585.4,215.2 592.9,229.0 597.9,237.8 604.2,244.8 614.2,242.3 620.5,245.3 628.5,251.6 636.8,246.6 643.0,237.8 651.8,226.0 660.6,226.0 670.6,232.8 676.9,234.8 683.2,231.5 691.9,218.2 703.2,203.9 712.0,203.2 724.5,207.0 730.8,216.5 737.1,227.8 742.1,242.8 748.4,260.4 754.6,280.4 760.9,303.0 765.9,324.3 766.6,323.8 775.4,340.6 784.1,340.6 790.4,334.3 800.4,332.6 815.5,332.1 830.5,331.8 838.1,327.6 850.6,325.5 860.6,324.3 868.2,323.8 873.2,327.6 880.7,338.8 890.7,348.9 900.8,358.9 910.8,367.7 918.3,375.7 925.8,376.5 935.9,375.2 948.4,373.9 958.4,371.4 971.0,371.4 979.7,372.7 986.0,377.2 998.6,383.2 1011.1,384.5 1021.1,383.2 1031.2,384.5 1043.7,385.2 1053.7,390.8 1066.3,395.8 1076.3,402.8 1086.3,406.6 1093.9,414.1 1100.1,418.6 1105.1,418.6 1111.4,414.8 1117.7,409.1 1123.9,396.5 1131.5,377.7 1140.0,352.9 1150.1,327.8 1157.6,312.8 1167.6,305.3 1180.2,300.8 1187.7,292.7 1196.5,280.2 1202.7,276.4 1212.8,278.2 1222.8,282.7 1235.3,283.9 1247.9,283.9 1260.4,290.7 1274.2,288.5 1285.5,294.0 1293.0,302.8 1305.5,309.0 1315.6,314.0 1325.6,319.1 1338.2,323.3 1350.7,324.1 1369.5,324.1 1374.5,315.3 1383.3,302.8 1395.8,290.2 1405.9,276.4 1418.4,257.6 1428.4,241.3 1436.0,232.5 1444.7,227.5 1452.3,229.5 1461.0,237.6 1471.1,242.6 1483.6,245.1 1498.7,245.1 1513.7,244.6 1526.2,247.1 1537.5,252.6 1546.3,247.1 1556.3,244.6 1567.6,243.8 1573.9,252.6 1583.9,270.2 1593.9,292.7 1602.7,307.8 1610.0,316.6 1610.5,315.1 1616.8,320.1 1625.6,318.9 1635.6,315.1 1648.2,310.1 1655.7,312.6 1663.2,312.6 1669.5,306.3 1680.8,303.8 1695.8,303.1 1704.6,298.8 1712.1,300.6 1718.4,305.1 1725.9,315.1 1733.4,328.9 1739.7,342.7 1742.2,351.0" fill="none" stroke="#387878" stroke-width="2" stroke-linejoin="round" shape-rendering="crispEdges"/>
<polyline points="16.3,209.8 25.1,203.0 35.1,194.2 45.1,185.5 53.9,180.4 62.7,179.2 72.7,176.7 85.3,174.2 97.8,172.4 107.8,170.4 114.1,168.7 122.9,168.4 130.4,170.4 140.4,172.9 150.5,174.9 160.5,175.9 173.0,175.4 183.1,175.4 193.1,177.4 203.1,182.4 213.2,185.5 225.7,185.5 235.7,186.0 248.3,187.2 258.3,191.7 268.3,196.7 278.4,201.8 288.4,205.0 300.9,205.5 311.0,210.0 321.0,213.0 326.0,212.5 336.1,209.3 348.6,203.0 358.6,201.0 366.1,198.0 376.2,190.5 386.2,180.4 396.2,167.9 406.3,155.4 416.3,146.6 426.3,140.3 436.4,131.5 446.4,122.8 453.4,118.5 461.4,120.8 470.0,124.0 480.0,127.3 490.1,139.1 492.6,140.0 502.6,152.5 512.6,165.1 520.2,180.1 530.2,202.7 542.7,225.3 555.3,236.6 565.3,250.3 575.3,269.2 585.4,280.4 595.4,286.7 605.4,289.7 615.5,288.7 628.0,291.0 640.5,288.0 650.6,281.7 660.6,279.2 670.6,272.2 679.4,272.2 690.7,277.9 703.2,290.5 718.3,303.0 728.3,318.1 730.2,322.5 740.3,337.6 750.3,352.6 760.3,366.4 767.8,373.9 775.4,377.7 785.4,377.7 795.4,375.7 810.5,374.7 820.5,372.2 830.5,370.9 840.6,372.2 850.6,372.7 858.1,375.2 868.2,381.5 878.2,389.0 888.2,395.3 900.8,399.0 913.3,402.8 920.8,406.6 930.8,407.8 943.4,407.8 953.4,404.8 963.4,402.3 973.5,402.3 983.5,404.8 996.1,409.1 1006.1,411.6 1016.1,412.3 1026.1,414.8 1036.2,417.8 1046.2,422.9 1056.2,430.4 1066.3,439.2 1076.3,446.7 1086.3,452.9 1096.4,456.2 1106.4,456.2 1118.9,454.2 1129.0,449.2 1135.0,441.9 1147.6,425.6 1160.1,410.6 1172.6,390.5 1185.2,370.5 1197.7,352.9 1210.3,339.1 1222.8,329.1 1235.3,324.1 1247.9,321.6 1260.4,319.8 1272.9,319.8 1283.0,323.3 1293.0,329.1 1303.0,334.1 1315.6,335.9 1328.1,337.9 1338.2,339.9 1350.7,340.4 1369.5,340.4 1378.3,335.9 1390.8,330.3 1403.4,321.6 1415.9,312.8 1428.4,301.5 1441.0,289.0 1453.5,278.9 1463.5,273.9 1476.1,271.4 1491.1,270.2 1503.7,270.2 1513.7,273.9 1526.2,282.7 1538.8,292.7 1551.3,305.3 1563.9,317.8 1576.4,330.3 1586.4,340.4 1596.5,350.4 1604.0,354.2 1610.0,357.4 1610.5,358.2 1623.1,357.7 1635.6,355.2 1648.2,351.5 1658.2,347.7 1665.7,350.2 1675.8,354.0 1688.3,355.2 1698.3,360.3 1710.9,371.5 1720.9,385.3 1730.9,396.6 1741.5,407.4" fill="none" stroke="#387878" stroke-width="2" stroke-linejoin="round" shape-rendering="crispEdges"/>
<polyline points="16.3,261.9 25.1,253.2 35.1,236.9 45.1,219.3 53.9,209.3 60.2,205.5 72.7,202.5 85.3,199.2 100.3,198.5 110.3,193.0 117.9,188.0 122.9,187.5 130.4,191.7 140.4,195.5 150.5,199.2 160.5,201.0 175.5,200.5 188.1,200.0 198.1,201.8 208.2,207.5 215.7,211.8 230.7,211.8 243.3,212.5 253.3,216.8 263.3,220.1 273.4,226.8 283.4,227.6 295.9,227.6 303.4,230.6 311.0,239.4 316.0,242.6 323.5,242.6 331.0,249.4 338.6,255.2 351.1,254.4 361.1,252.7 368.7,248.2 378.7,249.9 391.2,250.2 397.5,245.6 403.8,230.6 411.3,210.5 417.6,204.3 432.6,203.5 441.4,196.7 448.9,180.4 453.4,169.7 458.9,176.7 466.5,186.7 470.0,187.6 480.0,193.9 486.3,206.5 492.6,224.0 500.1,242.8 507.6,260.4 513.9,280.4 520.2,303.0 525.2,308.0 535.2,308.0 545.2,323.1 555.3,337.4 562.8,336.9 572.8,340.6 580.3,343.6 587.9,343.1 595.4,338.1 610.4,335.6 620.5,333.1 633.0,330.6 645.5,333.6 655.6,334.4 663.1,323.1 669.4,311.8 674.4,306.0 680.7,313.0 682.6,317.5 687.6,330.1 693.9,347.6 700.1,363.9 706.4,379.0 713.9,395.3 720.2,407.8 726.5,422.9 732.7,432.9 740.3,437.9 747.8,440.9 755.3,439.2 761.6,434.1 766.6,425.4 771.6,421.6 776.6,416.6 782.9,415.3 790.4,417.8 800.4,418.3 813.0,417.8 820.5,412.3 828.0,408.6 833.0,412.8 838.1,419.1 845.6,419.8 853.1,422.9 860.6,430.4 868.2,442.9 871.9,446.7 885.7,446.7 895.7,442.9 905.8,440.4 915.8,436.6 920.8,436.6 924.6,441.7 935.9,441.7 948.4,440.9 955.9,437.9 963.4,433.4 973.5,432.4 983.5,432.4 993.5,434.6 1006.1,437.9 1016.1,440.4 1026.1,444.2 1036.2,449.2 1043.7,454.2 1051.2,464.2 1061.3,474.3 1071.3,484.3 1078.8,490.6 1083.8,496.1 1091.3,496.3 1101.4,494.8 1111.4,498.1 1118.9,501.8 1129.0,510.6 1140.0,519.4 1140.9,520.9 1146.5,520.3 1155.3,519.9 1160.3,512.8 1166.6,502.8 1170.3,494.0 1174.1,480.2 1177.9,470.2 1181.0,460.8 1185.4,450.1 1190.2,441.9 1197.7,428.2 1205.2,410.6 1212.8,390.5 1220.3,376.7 1227.8,368.0 1237.8,362.4 1247.9,361.7 1255.4,352.9 1261.7,347.9 1267.9,350.9 1280.5,354.2 1290.5,356.7 1303.0,357.4 1315.6,357.4 1328.1,355.4 1340.7,355.4 1355.7,355.4 1367.0,354.9 1375.8,359.2 1385.8,365.5 1398.3,364.2 1413.4,368.0 1424.7,367.5 1433.4,359.2 1443.5,345.4 1453.5,325.3 1461.0,310.3 1468.6,302.8 1478.6,300.3 1486.1,295.2 1493.6,294.0 1503.7,295.2 1511.2,300.3 1521.2,315.3 1531.3,325.3 1541.3,337.9 1547.6,355.4 1553.8,370.5 1560.1,385.5 1566.4,399.3 1571.4,404.3 1581.4,406.8 1591.4,405.6 1601.5,401.8 1610.0,398.6 1613.1,396.6 1625.6,395.4 1640.6,396.1 1650.7,390.3 1659.5,381.1 1665.7,390.3 1673.2,402.4 1685.8,405.4 1693.3,409.2 1700.8,422.9 1708.4,438.0 1715.9,450.5 1720.9,460.6 1727.2,466.8 1734.7,469.3 1739.7,468.6 1743.0,466.8" fill="none" stroke="#387878" stroke-width="2" stroke-linejoin="round" shape-rendering="crispEdges"/>
<g shape-rendering="crispEdges">
<rect x="16" y="408" width="256" height="2" fill="#ff0000"/>
<rect x="345" y="408" width="1491" height="2" fill="#ff0000"/>
<rect x="16" y="420" width="261" height="2" fill="#ff0000"/>
<rect x="341" y="420" width="1495" height="2" fill="#ff0000"/>
<rect x="16" y="452" width="321" height="2" fill="#008000"/>
<rect x="410" y="452" width="1426" height="2" fill="#008000"/>
<rect x="16" y="463" width="34" height="2" fill="#008000"/>
<rect x="123" y="463" width="1713" height="2" fill="#008000"/>
</g>
<g shape-rendering="crispEdges" stroke="#ff0000" stroke-width="2">
<line x1="651" y1="233" x2="1836" y2="390.9"/>
<line x1="1428.4" y1="237.6" x2="1770.9" y2="374.0"/>
<line x1="1437.2" y1="341.6" x2="1779.7" y2="476.9"/>
</g>
</g>
<clipPath id="ci"><rect x="16" y="533" width="1820" height="307"/></clipPath>
<g clip-path="url(#ci)">
<g shape-rendering="crispEdges">
<rect x="16" y="579" width="1820" height="1" fill="#ff0000"/>
<rect x="16" y="609" width="1820" height="1" fill="#ff0000"/>
<rect x="16" y="679" width="1820" height="1" fill="#00c0f0"/>
<rect x="16" y="723" width="1820" height="1" fill="#00c0f0"/>
<rect x="16" y="799" width="1820" height="1" fill="#ff0066"/>
</g>
<polyline points="16.3,581.3 20.1,582.6 23.8,582.1 30.1,578.8 38.8,574.3 42.6,575.5 45.6,578.8 49.6,575.5 53.9,578.8 58.9,590.1 62.7,592.6 68.9,587.1 72.7,586.3 77.7,587.1 84.0,585.8 94.0,585.1 102.8,584.3 107.8,585.8 114.0,593.8 119.0,590.1 124.1,593.8 129.1,597.6 134.1,596.3 137.8,597.6 142.9,596.3 147.9,596.3 151.6,602.1 156.6,600.9 161.7,592.6 165.4,588.3 170.4,590.1 175.4,591.8 180.5,590.8 184.2,588.3 189.2,593.8 193.0,595.8 198.0,600.1 203.0,601.4 208.0,603.4 213.0,603.1 218.0,600.1 225.6,594.3 233.1,594.3 238.1,598.1 244.4,600.6 249.4,602.6 253.1,605.1 260.7,601.4 265.7,602.1 270.7,606.9 275.7,608.9 280.7,601.4 287.0,598.8 294.5,594.3 299.5,600.1 304.5,603.4 309.5,606.9 313.3,607.1 318.3,600.1 323.3,588.8 327.1,584.6 332.1,582.6 337.1,585.1 342.1,585.8 347.1,588.1 352.1,589.6 357.1,595.1 359.6,595.1 364.7,589.6 369.7,586.3 373.4,582.6 378.4,581.3 383.5,580.8 389.7,578.8 395.5,576.3 399.7,580.6 404.8,582.6 409.8,587.6 414.8,590.6 419.8,586.3 424.8,582.6 429.8,580.1 434.8,580.1 439.8,583.1 444.9,587.6 449.9,592.6 453.6,597.6 456.6,603.9 460.7,605.6 463.7,600.1 466.7,596.3 470.0,596.3 478.8,596.8 485.0,600.1 490.1,606.4 493.8,604.4 498.8,606.4 503.8,606.4 510.1,608.9 517.6,613.4 523.9,606.4 528.9,602.6 533.9,603.1 540.2,608.9 543.9,605.1 548.9,603.9 554.0,605.9 559.0,602.6 563.2,598.3 567.7,605.1 572.8,606.4 577.8,606.4 582.8,603.1 587.8,601.4 592.3,597.1 597.8,598.8 604.1,598.1 610.4,597.1 615.4,595.1 622.9,595.1 630.4,594.6 636.7,591.3 642.9,588.3 647.9,588.3 653.0,590.8 659.2,595.8 665.5,597.1 673.0,600.1 679.3,607.1 682.5,605.1 688.0,608.9 694.3,610.1 701.8,613.4 705.6,605.1 710.6,607.6 716.9,605.1 721.9,607.6 725.6,610.1 733.2,610.9 739.4,605.1 743.2,607.6 748.2,608.4 753.2,605.1 759.5,606.4 765.7,597.6 773.3,594.6 780.8,593.8 787.0,591.3 790.8,591.3 794.6,595.1 805.8,595.1 814.6,599.3 819.6,597.6 825.9,600.1 832.2,606.4 835.9,608.9 840.9,608.9 844.7,601.4 849.7,602.1 854.7,605.1 861.0,606.4 868.5,608.9 872.3,600.1 882.3,600.1 891.1,590.6 896.1,594.3 901.1,596.3 906.1,593.8 911.1,595.1 918.6,602.6 924.1,605.6 928.6,600.1 933.7,598.8 938.7,595.6 940.0,595.6 946.3,595.1 951.3,592.6 957.0,590.1 962.6,593.1 968.8,596.3 975.1,598.1 980.1,597.1 985.1,597.6 988.9,600.6 993.9,598.1 998.9,597.6 1003.9,600.6 1010.2,601.9 1016.4,605.6 1021.5,605.6 1025.2,600.1 1031.5,600.1 1036.5,601.4 1040.3,601.4 1044.0,608.9 1049.0,606.4 1052.8,609.4 1057.8,609.4 1061.6,605.9 1066.6,608.9 1071.6,604.4 1076.6,605.9 1081.6,608.4 1086.6,605.1 1090.4,598.8 1096.6,593.8 1102.9,590.8 1109.2,587.6 1115.4,586.8 1123.0,582.6 1129.2,581.3 1135.5,577.0 1140.5,574.3 1146.0,577.5 1150.0,574.3 1155.5,577.0 1160.6,582.6 1164.8,586.3 1169.3,584.3 1174.3,582.1 1179.3,580.1 1185.6,576.8 1191.9,576.3 1196.1,575.0 1201.9,578.8 1208.2,582.1 1214.4,583.8 1219.4,586.3 1224.5,584.3 1230.7,585.1 1235.7,588.8 1239.5,587.1 1244.5,591.3 1248.3,590.1 1252.0,592.6 1256.3,590.6 1262.1,595.8 1265.8,598.3 1269.6,592.6 1274.6,592.6 1280.9,595.8 1285.9,598.1 1289.6,593.1 1294.6,595.1 1299.6,598.1 1304.7,597.1 1310.9,593.1 1315.9,590.6 1321.0,590.1 1327.2,591.8 1333.5,595.6 1339.0,598.1 1343.5,595.1 1348.5,592.1 1353.5,593.8 1358.5,592.6 1363.6,593.8 1367.3,592.6 1372.3,585.1 1378.6,582.6 1384.9,580.6 1391.1,580.6 1398.6,578.3 1406.2,578.0 1410.0,577.0 1415.0,575.0 1420.0,574.5 1423.8,572.0 1430.1,571.8 1436.3,574.3 1442.6,576.3 1447.6,580.1 1452.6,585.1 1456.4,589.6 1460.1,588.1 1465.1,592.6 1470.2,594.6 1475.2,596.3 1480.2,593.8 1483.9,588.8 1488.9,590.6 1494.0,593.8 1499.0,592.6 1505.2,595.1 1512.8,602.6 1520.3,606.4 1529.0,609.6 1536.6,610.1 1541.6,613.9 1545.3,617.6 1552.9,618.9 1560.4,620.2 1566.6,619.4 1569.1,613.9 1570.4,605.1 1575.4,603.1 1580.4,604.6 1585.4,607.6 1590.5,606.4 1595.5,601.4 1600.5,601.4 1605.5,598.8 1609.2,598.1 1614.3,594.6 1619.3,590.1 1623.0,585.8 1628.0,588.8 1631.8,589.3 1636.8,596.3 1643.1,592.6 1649.3,592.1 1654.4,597.6 1660.6,604.6 1668.1,610.1 1673.2,607.6 1678.2,603.9 1683.2,600.1 1689.4,601.4 1695.7,603.1 1702.0,609.4 1708.2,609.4 1715.8,613.4 1720.8,611.4 1724.5,610.1 1729.5,606.4 1733.3,603.1 1738.3,605.9 1742.8,603.9" fill="none" stroke="#ff0000" stroke-width="1" />
<polyline points="16.3,574.3 25.1,576.3 35.1,576.3 45.1,577.0 55.1,577.5 65.2,582.6 75.2,584.3 85.2,585.6 95.2,585.1 105.3,584.3 112.8,586.8 120.3,587.6 130.3,590.8 140.4,592.6 150.4,595.1 156.6,597.6 162.9,595.8 170.4,593.3 180.5,592.6 190.5,592.1 200.5,595.1 210.5,598.1 218.0,599.6 225.6,598.1 234.3,596.3 243.1,597.6 253.1,599.6 263.2,600.6 273.2,603.1 278.2,603.1 288.2,601.4 295.7,600.1 303.3,600.1 310.8,601.9 317.0,602.6 323.3,598.8 330.8,594.6 340.9,590.6 350.9,590.1 358.4,592.6 365.9,590.6 375.9,587.6 386.0,585.1 396.0,582.1 406.0,582.6 414.8,585.6 423.6,585.1 432.3,583.3 441.1,583.3 448.6,585.8 456.1,591.3 462.4,594.3 470.0,595.1 480.0,595.1 490.1,598.3 500.1,601.4 510.1,603.9 520.1,607.1 530.2,605.9 540.2,605.9 552.7,605.1 565.2,604.4 575.3,605.6 587.8,603.4 597.8,602.1 610.4,599.6 620.4,597.6 630.4,596.8 640.4,595.1 647.9,592.1 655.5,592.1 665.5,593.3 675.5,597.1 685.5,600.1 695.6,604.6 703.1,605.9 710.6,606.9 720.6,606.4 730.7,608.1 740.7,607.6 750.7,607.1 760.7,606.4 770.8,603.1 780.8,599.3 790.8,596.3 800.8,596.3 810.9,596.3 820.9,597.6 828.4,597.6 838.4,602.6 848.4,602.6 858.5,604.6 871.0,605.1 878.5,603.9 886.0,602.1 893.6,598.8 903.6,597.6 913.6,596.3 923.6,599.3 933.7,599.3 940.0,598.3 950.0,595.8 960.1,594.3 967.6,594.3 977.6,595.8 990.1,597.6 1002.7,598.1 1012.7,599.6 1022.7,601.4 1032.7,601.4 1040.3,601.4 1050.3,603.9 1060.3,605.9 1067.8,606.4 1075.3,605.1 1082.9,606.9 1087.9,605.1 1095.4,601.4 1105.4,596.8 1115.4,592.6 1125.5,588.1 1135.5,584.3 1143.0,582.1 1150.5,580.6 1158.0,579.5 1163.1,581.3 1170.6,582.6 1180.6,581.3 1190.6,579.5 1200.7,578.3 1210.7,579.5 1220.7,581.3 1230.7,582.6 1240.8,585.1 1250.8,587.6 1260.8,590.1 1268.3,592.6 1278.3,592.6 1288.4,593.8 1298.4,595.6 1308.4,595.1 1318.4,593.8 1328.5,593.1 1338.5,595.1 1346.0,594.3 1356.0,593.8 1366.1,594.3 1373.6,591.3 1383.6,587.6 1393.6,585.1 1403.7,582.1 1410.0,581.3 1417.5,579.3 1427.5,576.3 1437.6,576.3 1447.6,577.0 1457.6,581.3 1467.6,585.8 1475.2,588.3 1485.2,589.3 1495.2,590.1 1505.2,592.1 1515.3,596.3 1525.3,600.6 1535.3,604.6 1542.8,606.4 1550.4,610.1 1557.9,613.1 1566.6,614.6 1572.9,612.1 1582.9,609.6 1593.0,607.1 1603.0,605.6 1613.0,602.1 1623.0,597.6 1630.6,594.6 1640.6,593.8 1650.6,593.1 1660.6,597.1 1670.7,602.1 1680.7,602.1 1690.7,601.9 1698.2,602.6 1705.7,605.9 1715.8,607.6 1724.5,608.9 1733.3,607.1 1742.8,606.4" fill="none" stroke="#000080" stroke-width="1.1" />
<polyline points="16.3,711.4 22.6,716.9 27.6,708.9 33.8,687.6 40.6,668.8 45.1,673.3 50.1,675.1 55.1,690.1 60.2,707.6 63.9,723.9 68.9,720.2 75.2,703.9 82.7,686.3 90.7,677.6 96.5,681.3 102.8,695.1 109.0,703.9 114.0,717.2 122.8,720.2 130.3,721.4 136.6,722.7 141.6,716.4 147.9,709.4 151.6,713.1 156.6,715.2 161.7,703.9 166.7,685.1 171.2,674.3 175.4,676.3 180.5,682.6 185.5,683.8 191.7,701.4 198.0,725.2 206.8,726.4 211.8,720.7 216.0,716.4 220.6,702.6 225.6,680.1 230.6,669.5 235.6,673.8 240.6,692.6 246.9,720.2 253.1,732.7 258.1,725.2 263.2,716.4 267.7,710.6 271.9,718.9 275.7,725.9 280.7,720.2 285.7,702.6 290.7,686.3 295.7,675.6 300.8,680.1 305.8,703.9 313.3,729.7 317.8,720.2 323.3,696.4 328.3,677.6 333.3,671.8 338.3,672.5 345.9,687.6 352.1,713.9 359.6,733.9 364.7,722.7 370.9,690.1 375.9,675.1 381.0,671.3 388.5,671.3 395.5,668.3 401.0,676.3 406.0,700.1 411.0,722.7 415.5,731.9 421.1,725.2 426.1,697.6 433.1,670.8 438.1,673.8 442.4,687.6 448.6,712.6 456.1,729.4 462.4,726.4 468.7,710.1 470.0,701.4 475.0,687.6 480.0,680.1 485.0,687.6 491.3,711.4 497.6,725.2 502.6,723.2 507.6,729.4 517.1,733.2 522.6,722.7 528.9,695.1 535.7,680.1 541.4,692.6 546.4,706.4 551.5,713.1 557.7,713.1 563.2,700.1 569.0,707.6 574.0,716.4 577.8,726.4 582.8,710.1 587.8,697.6 592.8,682.6 596.6,677.1 601.6,680.1 605.3,688.8 609.8,693.1 615.4,686.3 620.4,677.1 624.1,673.8 629.1,673.8 632.9,678.8 637.9,681.3 642.9,677.6 647.4,671.3 653.0,675.1 656.7,692.6 661.7,712.6 668.0,727.7 674.3,730.2 680.0,735.2 685.5,731.4 691.8,727.7 696.8,730.2 703.1,723.9 709.3,707.6 716.9,692.1 721.9,698.9 726.9,715.2 733.2,727.2 738.2,720.2 743.2,710.1 749.4,708.1 757.0,712.1 763.2,703.9 769.5,685.1 776.3,668.8 782.0,670.5 789.5,668.8 795.8,685.1 803.3,717.7 810.9,723.9 817.1,725.2 823.4,720.2 829.6,726.4 835.9,729.4 842.2,721.4 848.4,707.6 854.7,697.6 861.0,705.1 868.0,717.2 873.5,706.4 881.0,687.6 887.3,681.3 892.3,674.3 896.1,674.5 901.1,685.1 907.3,697.6 913.6,710.1 921.1,725.2 924.9,732.2 931.2,721.4 936.2,697.6 940.0,687.6 945.0,673.8 951.3,671.3 956.3,669.3 962.6,680.1 967.6,702.6 973.8,723.9 979.6,730.2 985.1,725.2 991.4,720.2 997.6,713.9 1002.7,710.6 1008.9,720.2 1013.9,727.2 1020.2,729.4 1025.2,720.2 1030.2,700.1 1035.2,685.1 1039.0,683.8 1042.8,698.9 1047.8,711.4 1053.3,726.4 1059.0,717.7 1065.3,712.6 1070.3,707.6 1075.3,704.4 1081.6,708.9 1086.6,711.4 1091.6,700.1 1096.6,680.1 1100.4,671.3 1105.4,668.0 1112.9,667.0 1120.5,669.5 1130.5,670.0 1136.7,669.5 1141.8,667.0 1146.8,670.5 1153.0,672.5 1159.3,682.6 1164.3,707.6 1169.3,718.2 1175.6,700.1 1181.9,681.3 1186.9,672.0 1192.4,666.3 1198.1,671.3 1203.2,682.6 1209.4,705.1 1215.7,722.7 1220.7,729.4 1227.0,722.7 1233.2,713.9 1238.2,708.4 1244.5,712.1 1248.3,710.6 1252.0,718.2 1257.0,714.6 1262.1,718.9 1267.1,722.7 1272.1,712.6 1277.1,697.6 1280.4,693.1 1285.4,710.1 1290.9,707.6 1294.6,701.4 1298.4,696.4 1302.2,702.6 1307.2,703.9 1312.2,696.4 1317.2,682.6 1322.2,671.3 1327.2,675.1 1332.2,697.6 1337.2,716.4 1340.5,724.7 1346.0,712.6 1351.0,695.1 1356.0,686.3 1359.0,682.6 1363.6,691.3 1368.6,693.1 1373.6,688.8 1378.6,678.8 1383.6,668.8 1388.6,668.0 1393.6,671.3 1399.9,673.0 1406.2,668.8 1410.0,667.5 1415.0,668.8 1421.3,673.8 1427.5,680.1 1433.8,682.6 1438.8,697.6 1445.1,710.1 1451.4,723.9 1456.4,732.2 1461.4,728.9 1466.4,727.7 1470.2,725.7 1475.2,726.4 1480.2,716.4 1485.2,698.9 1489.7,690.6 1493.2,689.6 1497.7,700.1 1504.0,715.2 1510.3,726.4 1517.8,731.4 1524.0,732.7 1530.3,729.7 1535.3,722.2 1539.1,720.2 1545.3,726.4 1552.9,726.4 1560.4,728.2 1566.6,731.4 1570.4,712.6 1576.7,687.6 1581.7,678.1 1585.4,692.6 1590.5,703.1 1594.2,705.1 1599.2,697.6 1605.5,680.1 1610.5,671.3 1615.5,667.5 1621.8,666.3 1628.0,670.0 1633.1,682.6 1638.1,702.6 1645.6,717.2 1650.1,707.6 1654.4,711.4 1659.4,722.7 1665.6,734.7 1670.7,735.2 1675.7,728.9 1681.9,710.1 1686.9,692.6 1692.7,684.6 1697.0,695.1 1702.0,717.7 1707.0,728.9 1712.0,732.2 1718.3,727.7 1724.5,715.2 1729.5,696.4 1733.3,686.3 1738.3,683.8 1742.8,686.3" fill="none" stroke="#00c8ff" stroke-width="1" />
<polyline points="16.3,698.9 21.3,708.9 25.1,713.4 31.3,706.4 37.6,687.6 43.9,675.1 48.9,672.5 53.9,682.6 58.9,692.6 63.9,708.9 68.9,717.7 72.7,718.2 77.7,710.1 85.2,692.6 91.5,682.6 96.5,680.1 102.8,687.6 110.3,700.1 116.5,712.6 122.8,718.9 129.1,719.7 136.6,722.7 141.6,720.7 149.1,712.6 155.4,713.1 160.4,713.1 166.7,700.1 172.9,682.6 178.4,677.6 184.2,682.6 191.7,695.1 198.0,712.6 204.3,722.7 210.5,723.9 215.5,722.7 221.8,711.4 228.1,690.1 234.3,674.5 239.3,678.8 244.4,697.6 250.6,717.7 258.1,727.7 264.4,720.7 270.2,714.4 275.7,716.4 280.7,721.4 287.0,711.4 293.2,692.6 299.5,680.1 304.5,686.3 310.8,710.1 317.0,722.7 323.3,711.4 330.8,687.6 337.1,672.5 341.4,670.5 347.1,678.8 353.4,700.1 359.6,721.4 364.7,727.2 370.9,715.2 377.2,690.1 382.2,677.1 388.5,672.5 396.0,670.5 402.3,675.1 408.5,692.6 414.8,716.4 420.6,727.7 426.1,718.9 432.3,697.6 438.6,677.6 443.1,678.8 448.6,695.1 454.9,715.2 461.2,725.2 466.2,723.9 470.0,716.4 476.3,701.4 483.8,683.8 490.1,692.6 497.6,715.2 505.1,725.2 511.4,728.4 518.9,730.2 526.4,721.4 533.9,695.1 540.2,686.3 545.2,692.6 552.7,707.6 559.0,712.6 565.2,707.6 570.3,704.4 575.3,710.6 581.5,717.7 587.8,713.9 594.1,695.1 600.3,681.3 605.3,682.6 611.6,688.8 617.9,686.3 624.1,678.8 629.1,675.6 635.4,678.8 641.7,680.1 647.9,676.3 654.2,676.3 660.5,692.6 666.7,715.2 673.0,727.7 680.5,732.7 688.0,733.2 695.6,730.2 701.8,727.7 708.1,720.2 715.6,705.1 720.6,696.4 725.6,698.1 731.9,715.2 738.2,722.7 744.4,715.2 752.0,708.9 758.2,710.1 764.5,703.9 772.0,687.6 779.5,671.3 785.8,670.0 790.8,669.5 797.1,680.1 803.3,703.9 809.6,718.9 815.9,725.9 820.9,723.9 825.9,721.4 832.2,723.9 839.7,727.7 845.9,720.2 853.5,705.1 859.7,701.4 864.7,702.6 869.7,711.4 877.3,705.1 884.8,691.3 892.3,679.6 897.3,676.3 902.3,678.1 908.6,691.3 916.1,707.6 923.6,722.7 928.1,727.7 933.7,723.9 940.0,705.1 945.0,687.6 951.3,676.3 956.3,671.3 961.3,672.5 966.3,683.8 972.6,705.1 978.8,723.9 985.1,727.7 991.4,723.9 997.6,718.9 1005.2,713.1 1010.2,715.2 1016.4,723.9 1022.7,726.4 1027.7,718.9 1034.0,702.6 1040.3,688.8 1045.3,692.6 1050.3,703.9 1055.3,716.4 1061.6,720.7 1067.8,715.2 1074.1,708.9 1079.1,705.9 1085.4,708.1 1090.4,707.6 1096.6,698.9 1101.7,682.6 1106.7,672.0 1112.9,668.0 1120.5,668.8 1130.5,670.0 1138.0,670.0 1144.3,668.8 1151.8,671.3 1160.6,678.8 1166.8,698.9 1172.6,712.6 1178.1,705.1 1184.4,687.6 1190.6,673.8 1196.9,669.5 1203.2,675.1 1209.4,692.6 1216.9,712.6 1224.5,726.4 1230.7,723.9 1237.0,715.2 1243.3,711.4 1248.3,710.6 1253.3,715.2 1257.0,713.9 1263.3,717.7 1269.6,718.4 1274.6,711.4 1279.6,703.9 1284.6,701.4 1289.6,705.1 1293.4,706.9 1298.4,703.1 1303.4,701.4 1309.7,700.9 1314.7,695.1 1321.0,683.8 1327.2,676.3 1331.5,678.8 1336.0,692.6 1341.0,708.9 1345.5,717.7 1351.0,712.6 1356.0,700.1 1362.3,687.6 1367.3,688.8 1372.3,690.1 1378.1,686.3 1383.6,676.3 1389.9,670.0 1394.9,670.0 1402.4,672.0 1410.0,670.0 1415.0,668.0 1421.3,672.0 1427.5,676.3 1433.8,678.8 1438.8,690.1 1445.1,703.9 1451.4,716.4 1457.6,726.4 1463.9,730.2 1471.4,727.2 1478.9,725.2 1485.2,712.6 1491.5,700.1 1496.5,693.8 1501.5,700.1 1507.7,712.6 1514.0,723.9 1520.3,730.2 1525.3,732.7 1531.6,730.2 1537.8,725.2 1542.8,722.7 1549.1,725.2 1556.6,726.4 1562.9,727.7 1567.9,729.7 1572.9,717.7 1579.2,695.1 1584.2,686.3 1589.2,691.3 1595.5,701.9 1600.5,700.1 1606.7,687.6 1613.0,675.1 1619.3,668.0 1624.3,667.5 1630.6,672.0 1635.6,682.6 1640.6,697.6 1645.6,710.1 1651.9,711.4 1658.1,713.9 1663.1,725.2 1669.4,732.7 1674.4,733.9 1679.4,727.7 1685.7,710.1 1692.0,695.1 1696.2,689.6 1700.7,695.1 1705.7,712.6 1712.0,726.4 1715.8,729.7 1722.0,726.4 1728.3,715.2 1734.6,697.6 1739.6,687.6 1742.8,685.6" fill="none" stroke="#5030ff" stroke-width="1" />
<polyline points="16.3,769.3 25.1,771.3 37.6,773.8 50.1,774.6 60.2,775.6 70.2,778.8 82.7,782.1 95.2,783.3 107.8,785.6 120.3,787.1 132.8,790.6 145.4,793.1 157.9,796.4 167.9,797.6 180.5,797.1 193.0,797.1 203.0,798.1 213.0,800.1 225.6,801.9 238.1,801.9 250.6,802.6 263.2,803.4 275.7,805.6 288.2,806.9 300.8,806.4 313.3,807.6 323.3,807.1 333.3,803.1 343.4,798.9 353.4,796.4 363.4,795.9 373.4,794.6 383.5,790.6 393.5,787.1 403.5,783.3 413.5,781.3 426.1,781.3 436.1,779.3 444.9,778.8 453.6,781.3 463.7,787.1 470.0,790.1 480.0,793.9 490.1,798.9 500.1,805.1 510.1,810.2 520.1,817.2 530.2,821.4 542.7,825.9 555.2,828.9 567.7,830.2 577.8,830.7 587.8,831.5 597.8,828.2 607.8,824.7 617.9,821.4 627.9,817.7 637.9,813.9 647.9,808.9 655.5,805.6 664.2,802.6 674.3,802.1 685.5,804.6 695.6,809.6 705.6,814.4 715.6,818.4 725.6,822.2 735.7,824.7 745.7,826.4 755.7,827.2 765.7,826.4 775.8,822.7 785.8,818.2 795.8,813.4 805.8,810.2 815.9,808.1 825.9,806.9 835.9,807.6 845.9,809.6 856.0,810.9 866.0,813.2 876.0,813.9 886.0,812.7 896.1,810.7 906.1,808.9 916.1,807.1 926.1,807.1 936.2,808.1 940.0,807.6 950.0,806.4 960.1,803.9 970.1,803.1 982.6,802.6 995.1,803.4 1007.7,804.4 1020.2,805.9 1032.7,806.9 1045.3,808.1 1057.8,810.9 1067.8,812.2 1077.8,813.9 1087.9,814.7 1097.9,813.2 1107.9,810.2 1117.9,806.4 1128.0,801.4 1138.0,795.1 1148.0,789.6 1158.0,784.6 1168.1,780.6 1178.1,778.8 1188.1,775.8 1198.1,773.8 1208.2,772.1 1218.2,772.6 1228.2,774.6 1238.2,777.1 1248.3,780.1 1258.3,783.1 1268.3,785.8 1278.3,788.8 1288.4,791.4 1298.4,793.9 1308.4,796.4 1318.4,797.1 1331.0,797.1 1341.0,798.1 1353.5,798.1 1366.1,798.1 1376.1,797.1 1386.1,795.1 1396.1,793.1 1406.2,790.1 1410.0,789.3 1420.0,786.3 1432.6,782.6 1445.1,781.3 1457.6,782.1 1470.2,784.6 1482.7,788.1 1495.2,790.1 1507.7,792.1 1520.3,795.9 1530.3,800.1 1540.3,802.6 1550.4,807.1 1560.4,812.2 1570.4,817.2 1580.4,817.7 1590.5,817.7 1603.0,817.2 1615.5,814.7 1625.5,810.2 1635.6,806.4 1645.6,803.9 1655.6,802.1 1665.6,803.4 1675.7,805.9 1685.7,808.1 1698.2,809.6 1708.2,812.7 1718.3,815.9 1728.3,818.4 1735.8,819.4 1742.8,819.4" fill="none" stroke="#00f0c0" stroke-width="1" />
<polyline points="16.3,772.6 25.1,775.8 35.1,775.8 42.6,775.1 52.6,776.3 60.2,780.6 66.4,783.3 75.2,783.8 82.7,785.1 95.2,785.6 105.3,786.3 115.3,789.6 125.3,791.9 135.3,795.6 145.4,796.9 154.1,800.1 162.9,800.1 170.4,798.1 180.5,796.9 189.2,796.4 198.0,798.9 205.5,801.4 213.0,803.9 220.6,803.4 230.6,801.9 240.6,801.9 250.6,803.9 260.7,805.6 268.2,805.6 275.7,808.1 285.7,808.1 295.7,805.6 303.3,805.6 313.3,809.4 320.8,806.4 328.3,798.9 333.3,795.9 343.4,792.6 350.9,792.6 358.4,794.4 365.9,794.4 373.4,790.1 381.0,785.1 388.5,782.6 396.0,778.3 403.5,777.1 411.0,778.1 417.3,780.6 424.8,780.1 433.6,776.3 442.4,776.8 448.6,780.1 453.6,783.8 458.6,791.4 463.7,796.4 470.0,800.1 477.5,800.6 485.0,803.9 492.6,810.9 502.6,816.4 511.4,822.7 520.1,831.0 527.6,829.7 535.2,828.4 542.7,832.2 550.2,831.5 557.7,832.2 564.0,829.7 570.3,831.5 577.8,833.2 585.3,831.5 592.8,825.2 602.8,821.4 612.9,816.4 622.9,812.2 632.9,807.6 642.9,802.6 649.2,798.4 655.5,797.1 663.0,798.9 670.5,800.9 678.0,806.4 688.0,812.2 695.6,818.2 703.1,823.2 710.6,824.4 720.6,826.4 730.7,830.2 738.2,829.7 745.7,828.4 753.2,828.4 762.0,826.4 770.8,820.2 780.8,813.2 790.8,807.6 800.8,804.6 810.9,804.4 823.4,804.4 830.9,807.6 839.7,812.2 851.0,812.7 861.0,814.7 869.7,817.2 877.3,815.2 883.5,813.9 891.1,808.9 901.1,806.4 908.6,804.6 914.9,804.4 921.1,807.1 929.9,808.4 938.7,806.4 940.0,806.4 947.5,804.6 955.0,802.1 965.1,800.1 972.6,801.9 982.6,802.6 992.6,803.4 1002.7,804.6 1012.7,806.9 1022.7,808.4 1036.5,808.4 1047.8,811.4 1057.8,814.4 1067.8,815.7 1077.8,815.7 1086.6,816.4 1092.9,813.9 1102.9,807.6 1112.9,800.9 1123.0,794.6 1133.0,788.1 1140.5,783.1 1148.0,778.1 1154.3,775.6 1160.6,775.1 1168.1,776.3 1175.6,775.8 1183.1,774.3 1190.6,770.6 1198.1,769.3 1205.7,770.1 1213.2,772.1 1223.2,776.3 1233.2,779.6 1243.3,783.8 1253.3,787.6 1265.8,792.1 1275.8,794.4 1285.9,796.4 1295.9,797.6 1305.9,799.4 1315.9,798.4 1326.0,798.9 1336.0,798.1 1346.0,799.4 1358.5,799.4 1371.1,797.6 1378.6,793.9 1386.1,790.1 1396.1,788.3 1406.2,785.6 1410.0,783.8 1420.0,781.3 1432.6,779.3 1442.6,779.6 1452.6,782.1 1465.1,787.6 1475.2,791.9 1487.7,793.1 1502.7,795.9 1515.3,800.9 1525.3,805.1 1535.3,808.1 1545.3,813.9 1555.4,818.9 1566.6,823.4 1572.9,820.7 1580.4,819.4 1590.5,818.9 1600.5,815.7 1610.5,811.4 1618.0,808.4 1625.5,802.6 1635.6,800.9 1645.6,800.1 1654.4,800.1 1663.1,803.9 1673.2,810.9 1683.2,811.4 1695.7,811.4 1705.7,816.4 1713.3,818.2 1720.8,822.7 1725.8,823.2 1733.3,821.4 1742.8,820.2" fill="none" stroke="#ff0066" stroke-width="1" />
</g>
<text x="10.6" y="19.0" font-size="14.5" fill="#c8c8c8" font-weight="bold" textLength="67.0" lengthAdjust="spacingAndGlyphs" >Daily .KSE</text>
<text x="1730.7" y="19.0" font-size="15" fill="#c8c8c8" textLength="178.8" lengthAdjust="spacing" >1/17/2017 - 8/15/2018 (KHI)</text>
<text x="24.3" y="42.0" font-size="14.6" fill="#ff0000" textLength="29.6" lengthAdjust="spacing" >Cndl,</text>
<text x="59.4" y="42.0" font-size="14.6" fill="#ff0000" textLength="30.3" lengthAdjust="spacing" >.KSE,</text>
<text x="96.2" y="42.0" font-size="14.6" fill="#ff0000" textLength="69.2" lengthAdjust="spacing" >7/17/2018,</text>
<text x="170.4" y="42.0" font-size="14.6" fill="#ff0000" textLength="65.2" lengthAdjust="spacing" >39,658.99,</text>
<text x="241.9" y="42.0" font-size="14.6" fill="#ff0000" textLength="65.1" lengthAdjust="spacing" >40,012.61,</text>
<text x="313.3" y="42.0" font-size="14.6" fill="#ff0000" textLength="65.9" lengthAdjust="spacing" >39,330.88,</text>
<text x="386.7" y="42.0" font-size="14.6" fill="#ff0000" textLength="66.4" lengthAdjust="spacing" >39,932.98,</text>
<text x="459.7" y="42.0" font-size="14.6" fill="#0000ff" textLength="54.2" lengthAdjust="spacing" >+267.21,</text>
<text x="521.2" y="42.0" font-size="14.6" fill="#0000ff" textLength="65.4" lengthAdjust="spacing" >(+0.67%),</text>
<text x="594.5" y="42.0" font-size="14.6" fill="#408080" textLength="40.1" lengthAdjust="spacing" >BBand,</text>
<text x="641.6" y="42.0" font-size="14.6" fill="#408080" textLength="30.2" lengthAdjust="spacing" >.KSE,</text>
<text x="678.3" y="42.0" font-size="14.6" fill="#408080" textLength="66.3" lengthAdjust="spacing" >7/17/2018,</text>
<text x="751.6" y="42.0" font-size="14.6" fill="#408080" textLength="66.3" lengthAdjust="spacing" >42,983.12,</text>
<text x="824.1" y="42.0" font-size="14.6" fill="#408080" textLength="65.7" lengthAdjust="spacing" >40,854.49,</text>
<text x="896.3" y="42.0" font-size="14.6" fill="#408080" textLength="62.6" lengthAdjust="spacing" >38,725.87</text>
<text x="24.3" y="549.8" font-size="14.6" fill="#ff0000" textLength="23.3" lengthAdjust="spacing" >RSI,</text>
<text x="53.9" y="549.8" font-size="14.6" fill="#ff0000" textLength="30.1" lengthAdjust="spacing" >.KSE,</text>
<text x="90.2" y="549.8" font-size="14.6" fill="#ff0000" textLength="68.9" lengthAdjust="spacing" >7/17/2018,</text>
<text x="164.2" y="549.8" font-size="14.6" fill="#ff0000" textLength="47.1" lengthAdjust="spacing" >37.074,</text>
<text x="219.3" y="549.8" font-size="14.6" fill="#000080" textLength="28.8" lengthAdjust="spacing" >EMA,</text>
<text x="253.6" y="549.8" font-size="14.6" fill="#000080" textLength="61.7" lengthAdjust="spacing" >RSI(.KSE),</text>
<text x="321.6" y="549.8" font-size="14.6" fill="#000080" textLength="68.1" lengthAdjust="spacing" >7/17/2018,</text>
<text x="395.5" y="549.8" font-size="14.6" fill="#000080" textLength="42.6" lengthAdjust="spacing" >33.577</text>
<text x="24.3" y="656.8" font-size="14.6" fill="#00c0f0" textLength="48.4" lengthAdjust="spacing" >StochS,</text>
<text x="76.4" y="656.8" font-size="14.6" fill="#00c0f0" textLength="31.4" lengthAdjust="spacing" >.KSE,</text>
<text x="113.3" y="656.8" font-size="14.6" fill="#00c0f0" textLength="68.4" lengthAdjust="spacing" >7/17/2018,</text>
<text x="187.5" y="656.8" font-size="14.6" fill="#00c0f0" textLength="46.8" lengthAdjust="spacing" >69.741,</text>
<text x="239.3" y="656.8" font-size="14.6" fill="#5030ff" textLength="43.4" lengthAdjust="spacing" >71.254</text>
<text x="24.3" y="761.5" font-size="14.6" fill="#ff0066" textLength="37.1" lengthAdjust="spacing" >MACD,</text>
<text x="68.9" y="761.5" font-size="14.6" fill="#ff0066" textLength="30.1" lengthAdjust="spacing" >.KSE,</text>
<text x="106.5" y="761.5" font-size="14.6" fill="#ff0066" textLength="67.7" lengthAdjust="spacing" >7/17/2018,</text>
<text x="180.5" y="761.5" font-size="14.6" fill="#ff0066" textLength="52.6" lengthAdjust="spacing" >-834.08,</text>
<text x="237.6" y="761.5" font-size="14.6" fill="#00f0c0" textLength="48.1" lengthAdjust="spacing" >-798.99</text>
<text x="275.7" y="414.8" font-size="14" fill="#008000" textLength="64.3" lengthAdjust="spacing" >40,865.18</text>
<text x="280.7" y="426.9" font-size="14" fill="#008000" textLength="56.3" lengthAdjust="spacing" >40,426.4</text>
<text x="341.4" y="459.0" font-size="14" fill="#008000" textLength="63.4" lengthAdjust="spacing" >39,241.45</text>
<text x="54.6" y="470.2" font-size="14" fill="#008000" textLength="62.7" lengthAdjust="spacing" >38,830.47</text>
<g shape-rendering="crispEdges">
<rect x="1837" y="487" width="5" height="1" fill="#000"/>
<rect x="1837" y="460" width="5" height="1" fill="#000"/>
<rect x="1837" y="378" width="5" height="1" fill="#000"/>
<rect x="1837" y="323" width="5" height="1" fill="#000"/>
<rect x="1837" y="296" width="5" height="1" fill="#000"/>
<rect x="1837" y="268" width="5" height="1" fill="#000"/>
<rect x="1837" y="241" width="5" height="1" fill="#000"/>
<rect x="1837" y="213" width="5" height="1" fill="#000"/>
<rect x="1837" y="186" width="5" height="1" fill="#000"/>
<rect x="1837" y="159" width="5" height="1" fill="#000"/>
<rect x="1837" y="131" width="5" height="1" fill="#000"/>
<rect x="1837" y="104" width="5" height="1" fill="#000"/>
<rect x="1837" y="76" width="5" height="1" fill="#000"/>
<rect x="1837" y="514" width="5" height="1" fill="#000"/>
</g>
<text x="1844.2" y="492.8" font-size="14" fill="#000" textLength="43.4" lengthAdjust="spacing" >38,000</text>
<text x="1844.2" y="466.4" font-size="14" fill="#000" textLength="43.4" lengthAdjust="spacing" >39,000</text>
<text x="1844.2" y="383.3" font-size="14" fill="#000" textLength="43.4" lengthAdjust="spacing" >42,000</text>
<text x="1844.2" y="328.5" font-size="14" fill="#000" textLength="43.4" lengthAdjust="spacing" >44,000</text>
<text x="1844.2" y="301.1" font-size="14" fill="#000" textLength="43.4" lengthAdjust="spacing" >45,000</text>
<text x="1844.2" y="273.7" font-size="14" fill="#000" textLength="43.4" lengthAdjust="spacing" >46,000</text>
<text x="1844.2" y="247.2" font-size="14" fill="#000" textLength="43.4" lengthAdjust="spacing" >47,000</text>
<text x="1844.2" y="218.9" font-size="14" fill="#000" textLength="43.4" lengthAdjust="spacing" >48,000</text>
<text x="1844.2" y="191.5" font-size="14" fill="#000" textLength="43.4" lengthAdjust="spacing" >49,000</text>
<text x="1844.2" y="164.2" font-size="14" fill="#000" font-weight="bold" textLength="48.4" lengthAdjust="spacingAndGlyphs" >50,000</text>
<text x="1844.2" y="136.8" font-size="14" fill="#000" textLength="43.4" lengthAdjust="spacing" >51,000</text>
<text x="1844.2" y="109.4" font-size="14" fill="#000" textLength="43.4" lengthAdjust="spacing" >52,000</text>
<text x="1844.2" y="82.0" font-size="14" fill="#000" textLength="43.4" lengthAdjust="spacing" >53,000</text>
<text x="1842.3" y="57.0" font-size="14" fill="#000" font-weight="bold" textLength="32.6" lengthAdjust="spacingAndGlyphs" >Price</text>
<rect x="1843.5" y="515.5" width="35" height="16" fill="#fff" stroke="#000" stroke-width="1" shape-rendering="crispEdges"/>
<text x="1844.5" y="528.6" font-size="14" fill="#000" font-weight="bold" textLength="32.6" lengthAdjust="spacingAndGlyphs" >Auto</text>
<rect x="1837" y="343" width="75" height="17" fill="#408080" shape-rendering="crispEdges"/>
<text x="1837.7" y="357.2" font-size="14" fill="#fff" textLength="63.2" lengthAdjust="spacing" >42,983.12</text>
<rect x="1837" y="401" width="75" height="17" fill="#408080" shape-rendering="crispEdges"/>
<text x="1837.7" y="415.2" font-size="14" fill="#fff" textLength="63.2" lengthAdjust="spacing" >40,854.49</text>
<rect x="1837" y="426" width="75" height="17" fill="#ff0000" shape-rendering="crispEdges"/>
<text x="1837.7" y="440.2" font-size="14" fill="#000" font-weight="bold" textLength="70.2" lengthAdjust="spacingAndGlyphs" >39,932.98</text>
<rect x="1837" y="459" width="75" height="17" fill="#408080" shape-rendering="crispEdges"/>
<text x="1837.7" y="473.2" font-size="14" fill="#fff" textLength="63.2" lengthAdjust="spacing" >38,725.87</text>
<text x="1842.4" y="565.0" font-size="14" fill="#c8c8c8" font-weight="bold" textLength="37.6" lengthAdjust="spacingAndGlyphs" >Value</text>
<rect x="1837" y="594" width="5" height="1" fill="#c8c8c8" shape-rendering="crispEdges"/>
<text x="1844.3" y="599.0" font-size="14" fill="#c8c8c8" >50</text>
<rect x="1837" y="631" width="5" height="1" fill="#c8c8c8" shape-rendering="crispEdges"/>
<rect x="1843.5" y="623.5" width="35" height="15" fill="#fff" stroke="#c8c8c8" stroke-width="1" shape-rendering="crispEdges"/>
<text x="1844.5" y="635.8" font-size="14" fill="#c8c8c8" font-weight="bold" textLength="32.6" lengthAdjust="spacingAndGlyphs" >Auto</text>
<rect x="1837" y="596" width="75" height="17" fill="#ff0000" shape-rendering="crispEdges"/>
<text x="1837.7" y="610.2" font-size="14" fill="#000" font-weight="bold" textLength="47.6" lengthAdjust="spacingAndGlyphs" >37.074</text>
<rect x="1837" y="613" width="75" height="17" fill="#000080" shape-rendering="crispEdges"/>
<text x="1837.7" y="627.2" font-size="14" fill="#fff" >33.577</text>
<rect x="1837" y="701" width="5" height="1" fill="#c8c8c8" shape-rendering="crispEdges"/>
<text x="1844.3" y="706.8" font-size="14" fill="#c8c8c8" >50</text>
<rect x="1837" y="737" width="5" height="1" fill="#c8c8c8" shape-rendering="crispEdges"/>
<rect x="1843.5" y="729.5" width="35" height="15" fill="#fff" stroke="#c8c8c8" stroke-width="1" shape-rendering="crispEdges"/>
<text x="1844.5" y="741.8" font-size="14" fill="#c8c8c8" font-weight="bold" textLength="32.6" lengthAdjust="spacingAndGlyphs" >Auto</text>
<rect x="1837" y="661" width="75" height="17" fill="#5030ff" shape-rendering="crispEdges"/>
<text x="1837.7" y="675.2" font-size="14" fill="#000020" >71.254</text>
<rect x="1837" y="678" width="75" height="17" fill="#00c8ff" shape-rendering="crispEdges"/>
<text x="1837.7" y="692.2" font-size="14" fill="#000" font-weight="bold" textLength="46.4" lengthAdjust="spacingAndGlyphs" >69.741</text>
<text x="1842.4" y="777.2" font-size="14" fill="#c8c8c8" font-weight="bold" textLength="37.6" lengthAdjust="spacingAndGlyphs" >Value</text>
<rect x="1843.5" y="824.5" width="35" height="15" fill="#fff" stroke="#c8c8c8" stroke-width="1" shape-rendering="crispEdges"/>
<text x="1844.5" y="836.8" font-size="14" fill="#c8c8c8" font-weight="bold" textLength="32.6" lengthAdjust="spacingAndGlyphs" >Auto</text>
<rect x="1837" y="795" width="75" height="17" fill="#00f0c0" shape-rendering="crispEdges"/>
<text x="1837.7" y="809.2" font-size="14" fill="#000" textLength="47.0" lengthAdjust="spacing" >-798.99</text>
<rect x="1837" y="812" width="75" height="17" fill="#ff0066" shape-rendering="crispEdges"/>
<text x="1837.7" y="826.2" font-size="14" fill="#000" font-weight="bold" textLength="53.3" lengthAdjust="spacingAndGlyphs" >-834.08</text>
<g>
<rect x="1882.5" y="28.5" width="12" height="12" rx="1.2" fill="#dbe8f8" stroke="#5a7090"/>
<rect x="1883.5" y="30.5" width="10" height="8" fill="#fbfbfa" stroke="#404052"/>
<rect x="1886.5" y="33.5" width="4" height="2" fill="#a4c4e6" stroke="#404052"/>
<rect x="1897.5" y="28.5" width="12" height="12" rx="1.2" fill="#f6b8a8" stroke="#42081a"/>
<path d="M1898.5 31.5L1902 34.5L1898.5 37.5ZM1908.5 31.5L1905 34.5L1908.5 37.5Z" fill="#e2542e"/>
<path d="M1899.6 31.2L1907.4 37.8M1907.4 31.2L1899.6 37.8" stroke="#303848" stroke-width="4" fill="none"/>
<path d="M1899.6 31.2L1907.4 37.8M1907.4 31.2L1899.6 37.8" stroke="#fff" stroke-width="2" fill="none"/>
</g>
<g>
<rect x="1882.5" y="536.5" width="12" height="12" rx="1.2" fill="#dbe8f8" stroke="#5a7090"/>
<rect x="1883.5" y="538.5" width="10" height="8" fill="#fbfbfa" stroke="#404052"/>
<rect x="1886.5" y="541.5" width="4" height="2" fill="#a4c4e6" stroke="#404052"/>
<rect x="1897.5" y="536.5" width="12" height="12" rx="1.2" fill="#f6b8a8" stroke="#42081a"/>
<path d="M1898.5 539.5L1902 542.5L1898.5 545.5ZM1908.5 539.5L1905 542.5L1908.5 545.5Z" fill="#e2542e"/>
<path d="M1899.6 539.2L1907.4 545.8M1907.4 539.2L1899.6 545.8" stroke="#303848" stroke-width="4" fill="none"/>
<path d="M1899.6 539.2L1907.4 545.8M1907.4 539.2L1899.6 545.8" stroke="#fff" stroke-width="2" fill="none"/>
</g>
<g>
<rect x="1882.5" y="643.5" width="12" height="12" rx="1.2" fill="#dbe8f8" stroke="#5a7090"/>
<rect x="1883.5" y="645.5" width="10" height="8" fill="#fbfbfa" stroke="#404052"/>
<rect x="1886.5" y="648.5" width="4" height="2" fill="#a4c4e6" stroke="#404052"/>
<rect x="1897.5" y="643.5" width="12" height="12" rx="1.2" fill="#f6b8a8" stroke="#42081a"/>
<path d="M1898.5 646.5L1902 649.5L1898.5 652.5ZM1908.5 646.5L1905 649.5L1908.5 652.5Z" fill="#e2542e"/>
<path d="M1899.6 646.2L1907.4 652.8M1907.4 646.2L1899.6 652.8" stroke="#303848" stroke-width="4" fill="none"/>
<path d="M1899.6 646.2L1907.4 652.8M1907.4 646.2L1899.6 652.8" stroke="#fff" stroke-width="2" fill="none"/>
</g>
<g>
<rect x="1882.5" y="748.5" width="12" height="12" rx="1.2" fill="#dbe8f8" stroke="#5a7090"/>
<rect x="1883.5" y="750.5" width="10" height="8" fill="#fbfbfa" stroke="#404052"/>
<rect x="1886.5" y="753.5" width="4" height="2" fill="#a4c4e6" stroke="#404052"/>
<rect x="1897.5" y="748.5" width="12" height="12" rx="1.2" fill="#f6b8a8" stroke="#42081a"/>
<path d="M1898.5 751.5L1902 754.5L1898.5 757.5ZM1908.5 751.5L1905 754.5L1908.5 757.5Z" fill="#e2542e"/>
<path d="M1899.6 751.2L1907.4 757.8M1907.4 751.2L1899.6 757.8" stroke="#303848" stroke-width="4" fill="none"/>
<path d="M1899.6 751.2L1907.4 757.8M1907.4 751.2L1899.6 757.8" stroke="#fff" stroke-width="2" fill="none"/>
</g>
<g shape-rendering="crispEdges">
<rect x="68" y="842" width="1" height="3" fill="#000"/>
<rect x="119" y="842" width="1" height="3" fill="#000"/>
<rect x="160" y="842" width="1" height="3" fill="#000"/>
<rect x="211" y="842" width="1" height="3" fill="#000"/>
<rect x="262" y="842" width="1" height="3" fill="#000"/>
<rect x="308" y="842" width="1" height="3" fill="#000"/>
<rect x="355" y="842" width="1" height="3" fill="#000"/>
<rect x="401" y="842" width="1" height="3" fill="#000"/>
<rect x="456" y="842" width="1" height="3" fill="#000"/>
<rect x="507" y="842" width="1" height="3" fill="#000"/>
<rect x="539" y="842" width="1" height="3" fill="#000"/>
<rect x="586" y="842" width="1" height="3" fill="#000"/>
<rect x="637" y="842" width="1" height="3" fill="#000"/>
<rect x="683" y="842" width="1" height="3" fill="#000"/>
<rect x="739" y="842" width="1" height="3" fill="#000"/>
<rect x="780" y="842" width="1" height="3" fill="#000"/>
<rect x="827" y="842" width="1" height="3" fill="#000"/>
<rect x="873" y="842" width="1" height="3" fill="#000"/>
<rect x="928" y="842" width="1" height="3" fill="#000"/>
<rect x="979" y="842" width="1" height="3" fill="#000"/>
<rect x="1030" y="842" width="1" height="3" fill="#000"/>
<rect x="1076" y="842" width="1" height="3" fill="#000"/>
<rect x="1118" y="842" width="1" height="3" fill="#000"/>
<rect x="1169" y="842" width="1" height="3" fill="#000"/>
<rect x="1224" y="842" width="1" height="3" fill="#000"/>
<rect x="1271" y="842" width="1" height="3" fill="#000"/>
<rect x="1312" y="842" width="1" height="3" fill="#000"/>
<rect x="1363" y="842" width="1" height="3" fill="#000"/>
<rect x="1409" y="842" width="1" height="3" fill="#000"/>
<rect x="1456" y="842" width="1" height="3" fill="#000"/>
<rect x="1507" y="842" width="1" height="3" fill="#000"/>
<rect x="1553" y="842" width="1" height="3" fill="#000"/>
<rect x="1608" y="842" width="1" height="3" fill="#000"/>
<rect x="1650" y="842" width="1" height="3" fill="#000"/>
<rect x="1692" y="842" width="1" height="3" fill="#000"/>
<rect x="1738" y="842" width="1" height="3" fill="#000"/>
<rect x="1793" y="842" width="1" height="3" fill="#000"/>
<rect x="68" y="862" width="1" height="17" fill="#000"/>
<rect x="160" y="862" width="1" height="17" fill="#000"/>
<rect x="262" y="862" width="1" height="17" fill="#000"/>
<rect x="355" y="862" width="1" height="17" fill="#000"/>
<rect x="456" y="862" width="1" height="17" fill="#000"/>
<rect x="539" y="862" width="1" height="17" fill="#000"/>
<rect x="637" y="862" width="1" height="17" fill="#000"/>
<rect x="739" y="862" width="1" height="17" fill="#000"/>
<rect x="827" y="862" width="1" height="17" fill="#000"/>
<rect x="928" y="862" width="1" height="17" fill="#000"/>
<rect x="1030" y="862" width="1" height="17" fill="#000"/>
<rect x="1118" y="862" width="1" height="17" fill="#000"/>
<rect x="1224" y="862" width="1" height="17" fill="#000"/>
<rect x="1312" y="862" width="1" height="17" fill="#000"/>
<rect x="1409" y="862" width="1" height="17" fill="#000"/>
<rect x="1507" y="862" width="1" height="17" fill="#000"/>
<rect x="1608" y="862" width="1" height="17" fill="#000"/>
<rect x="1692" y="862" width="1" height="17" fill="#000"/>
<rect x="1793" y="862" width="1" height="17" fill="#000"/>
</g>
<text x="69.8" y="858.0" font-size="14" fill="#000" text-anchor="middle" >01</text>
<text x="120.8" y="858.0" font-size="14" fill="#000" text-anchor="middle" >16</text>
<text x="161.8" y="858.0" font-size="14" fill="#000" text-anchor="middle" >01</text>
<text x="212.8" y="858.0" font-size="14" fill="#000" text-anchor="middle" >16</text>
<text x="263.8" y="858.0" font-size="14" fill="#000" text-anchor="middle" >03</text>
<text x="309.8" y="858.0" font-size="14" fill="#000" text-anchor="middle" >17</text>
<text x="356.8" y="858.0" font-size="14" fill="#000" text-anchor="middle" >02</text>
<text x="402.8" y="858.0" font-size="14" fill="#000" text-anchor="middle" >16</text>
<text x="457.8" y="858.0" font-size="14" fill="#000" text-anchor="middle" >01</text>
<text x="508.8" y="858.0" font-size="14" fill="#000" text-anchor="middle" >16</text>
<text x="540.8" y="858.0" font-size="14" fill="#000" text-anchor="middle" >03</text>
<text x="587.8" y="858.0" font-size="14" fill="#000" text-anchor="middle" >17</text>
<text x="638.8" y="858.0" font-size="14" fill="#000" text-anchor="middle" >01</text>
<text x="684.8" y="858.0" font-size="14" fill="#000" text-anchor="middle" >16</text>
<text x="740.8" y="858.0" font-size="14" fill="#000" text-anchor="middle" >05</text>
<text x="781.8" y="858.0" font-size="14" fill="#000" text-anchor="middle" >18</text>
<text x="828.8" y="858.0" font-size="14" fill="#000" text-anchor="middle" >02</text>
<text x="874.8" y="858.0" font-size="14" fill="#000" text-anchor="middle" >16</text>
<text x="929.8" y="858.0" font-size="14" fill="#000" text-anchor="middle" >01</text>
<text x="980.8" y="858.0" font-size="14" fill="#000" text-anchor="middle" >16</text>
<text x="1031.8" y="858.0" font-size="14" fill="#000" text-anchor="middle" >04</text>
<text x="1077.8" y="858.0" font-size="14" fill="#000" text-anchor="middle" >18</text>
<text x="1119.8" y="858.0" font-size="14" fill="#000" text-anchor="middle" >01</text>
<text x="1170.8" y="858.0" font-size="14" fill="#000" text-anchor="middle" >16</text>
<text x="1225.8" y="858.0" font-size="14" fill="#000" text-anchor="middle" >01</text>
<text x="1272.8" y="858.0" font-size="14" fill="#000" text-anchor="middle" >16</text>
<text x="1313.8" y="858.0" font-size="14" fill="#000" text-anchor="middle" >01</text>
<text x="1364.8" y="858.0" font-size="14" fill="#000" text-anchor="middle" >16</text>
<text x="1410.8" y="858.0" font-size="14" fill="#000" text-anchor="middle" >02</text>
<text x="1457.8" y="858.0" font-size="14" fill="#000" text-anchor="middle" >16</text>
<text x="1508.8" y="858.0" font-size="14" fill="#000" text-anchor="middle" >02</text>
<text x="1554.8" y="858.0" font-size="14" fill="#000" text-anchor="middle" >16</text>
<text x="1609.8" y="858.0" font-size="14" fill="#000" text-anchor="middle" >01</text>
<text x="1651.8" y="858.0" font-size="14" fill="#000" text-anchor="middle" >19</text>
<text x="1693.8" y="858.0" font-size="14" fill="#000" text-anchor="middle" >02</text>
<text x="1739.8" y="858.0" font-size="14" fill="#000" text-anchor="middle" >16</text>
<text x="1794.8" y="858.0" font-size="14" fill="#000" text-anchor="middle" >01</text>
<text x="39.4" y="875.0" font-size="14" fill="#000" font-weight="bold" text-anchor="middle" letter-spacing="0.4">Jan 17</text>
<text x="113.6" y="875.0" font-size="14" fill="#000" font-weight="bold" text-anchor="middle" letter-spacing="0.4">Feb 17</text>
<text x="210.7" y="875.0" font-size="14" fill="#000" font-weight="bold" text-anchor="middle" letter-spacing="0.4">Mar 17</text>
<text x="308.1" y="875.0" font-size="14" fill="#000" font-weight="bold" text-anchor="middle" letter-spacing="0.4">Apr 17</text>
<text x="405.2" y="875.0" font-size="14" fill="#000" font-weight="bold" text-anchor="middle" letter-spacing="0.4">May 17</text>
<text x="497.4" y="875.0" font-size="14" fill="#000" font-weight="bold" text-anchor="middle" letter-spacing="0.4">Jun 17</text>
<text x="587.7" y="875.0" font-size="14" fill="#000" font-weight="bold" text-anchor="middle" letter-spacing="0.4">Jul 17</text>
<text x="687.5" y="875.0" font-size="14" fill="#000" font-weight="bold" text-anchor="middle" letter-spacing="0.4">Aug 17</text>
<text x="782.5" y="875.0" font-size="14" fill="#000" font-weight="bold" text-anchor="middle" letter-spacing="0.4">Sep 17</text>
<text x="877.1" y="875.0" font-size="14" fill="#000" font-weight="bold" text-anchor="middle" letter-spacing="0.4">Oct 17</text>
<text x="978.7" y="875.0" font-size="14" fill="#000" font-weight="bold" text-anchor="middle" letter-spacing="0.4">Nov 17</text>
<text x="1073.5" y="875.0" font-size="14" fill="#000" font-weight="bold" text-anchor="middle" letter-spacing="0.4">Dec 17</text>
<text x="1170.5" y="875.0" font-size="14" fill="#000" font-weight="bold" text-anchor="middle" letter-spacing="0.4">Jan 18</text>
<text x="1267.7" y="875.0" font-size="14" fill="#000" font-weight="bold" text-anchor="middle" letter-spacing="0.4">Feb 18</text>
<text x="1360.2" y="875.0" font-size="14" fill="#000" font-weight="bold" text-anchor="middle" letter-spacing="0.4">Mar 18</text>
<text x="1457.7" y="875.0" font-size="14" fill="#000" font-weight="bold" text-anchor="middle" letter-spacing="0.4">Apr 18</text>
<text x="1557.2" y="875.0" font-size="14" fill="#000" font-weight="bold" text-anchor="middle" letter-spacing="0.4">May 18</text>
<text x="1649.6" y="875.0" font-size="14" fill="#000" font-weight="bold" text-anchor="middle" letter-spacing="0.4">Jun 18</text>
<text x="1742.0" y="875.0" font-size="14" fill="#000" font-weight="bold" text-anchor="middle" letter-spacing="0.4">Jul 18</text>
</svg>
</body></html>
